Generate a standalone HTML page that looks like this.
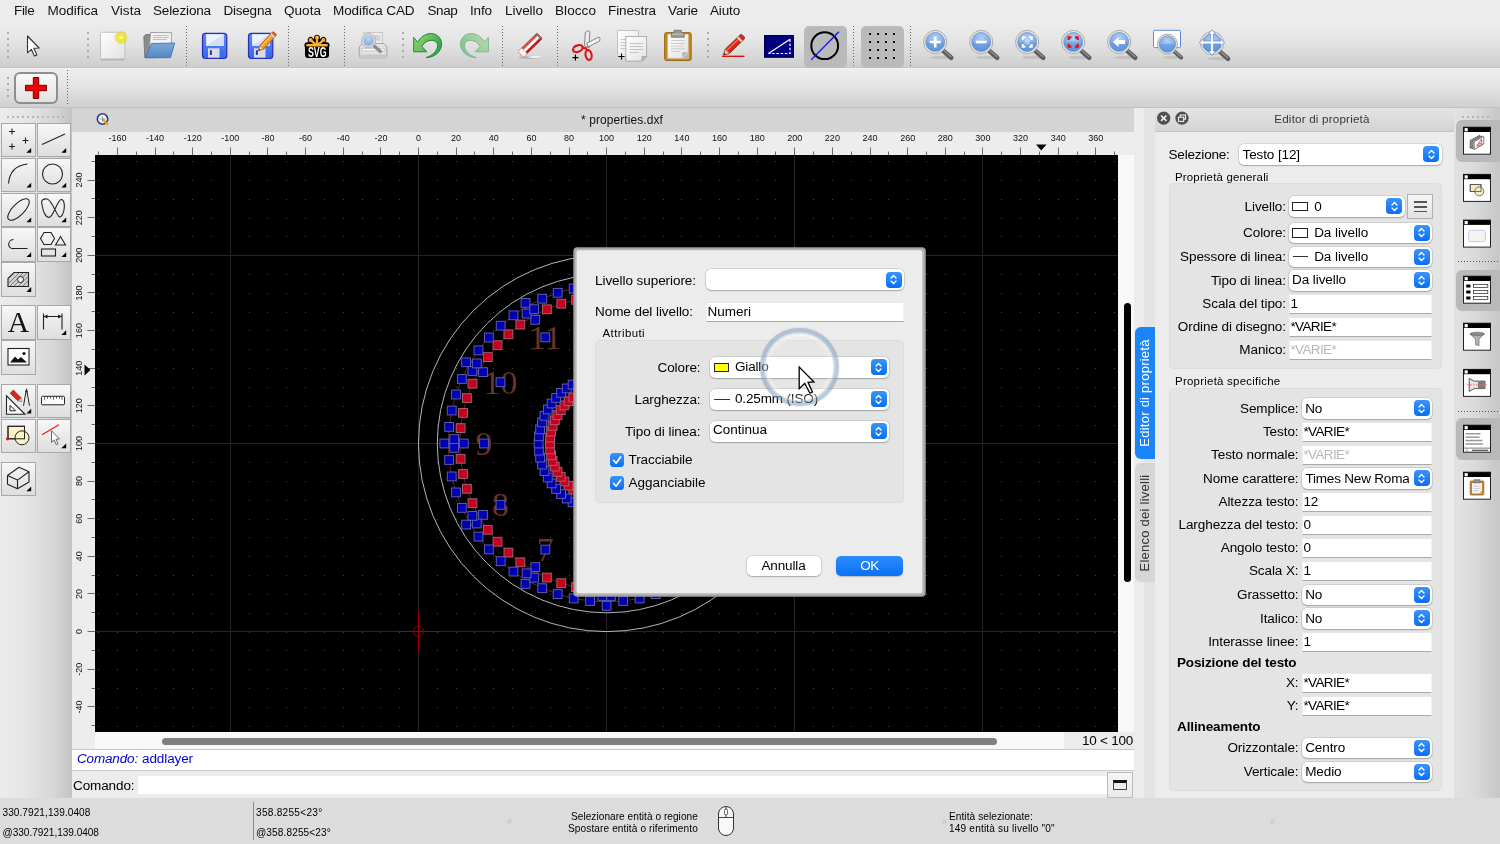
<!DOCTYPE html>
<html lang="it"><head><meta charset="utf-8"><title>properties.dxf</title>
<style>
*{box-sizing:border-box;margin:0;padding:0}
html,body{width:1500px;height:844px;overflow:hidden;background:#ececec;font-family:"Liberation Sans",sans-serif;font-size:13px;color:#000}
#root{position:absolute;left:0;top:0;width:1500px;height:844px;overflow:hidden;will-change:transform;transform:translateZ(0)}
.t{position:absolute;white-space:pre}
.a{position:absolute}
svg{position:absolute;overflow:visible}
.combo{position:absolute;background:#fff;border-radius:5px;box-shadow:0 0 0 .5px rgba(0,0,0,.18),0 1px 1.5px rgba(0,0,0,.22)}
.cb{position:absolute;width:16px;height:16px;border-radius:4px;background:linear-gradient(#3b94fb,#0a6ef5);right:2.3px;top:2.5px}
.field{position:absolute;background:#fff;border:1px solid #f0f0f0;border-top-color:#e6e6e6;border-bottom-color:#a9a9a9}
.grp{position:absolute;background:#e4e4e4;border:1px solid #dcdcdc;border-radius:5px}
.tb{position:absolute;left:0;width:1500px}
.hd{position:absolute;width:2px;background:repeating-linear-gradient(#ababab 0 2px,transparent 2px 6px)}
.sep{position:absolute;width:1px;background:repeating-linear-gradient(#666 0 1px,transparent 1px 3px)}
.tbtn{position:absolute;width:36px;height:36px;background:linear-gradient(#f7f7f7,#dedede);border:1px solid #a8a8a8}
</style></head>
<body>
<div id="root">
<div class="a" style="left:0;top:0;width:1500px;height:23px;background:#ececec"></div><div class="t" style="top:1.42px;font-size:13.52px;line-height:19px;color:#111;letter-spacing:-0.321px;left:14px;">File</div><div class="t" style="top:1.42px;font-size:13.52px;line-height:19px;color:#111;letter-spacing:0.02px;left:47.5px;">Modifica</div><div class="t" style="top:1.42px;font-size:13.52px;line-height:19px;color:#111;letter-spacing:0.038px;left:111px;">Vista</div><div class="t" style="top:1.42px;font-size:13.52px;line-height:19px;color:#111;letter-spacing:-0.153px;left:153px;">Seleziona</div><div class="t" style="top:1.42px;font-size:13.52px;line-height:19px;color:#111;letter-spacing:-0.229px;left:223.5px;">Disegna</div><div class="t" style="top:1.42px;font-size:13.52px;line-height:19px;color:#111;letter-spacing:0.034px;left:284px;">Quota</div><div class="t" style="top:1.42px;font-size:13.52px;line-height:19px;color:#111;letter-spacing:-0.095px;left:333px;">Modifica CAD</div><div class="t" style="top:1.42px;font-size:13.52px;line-height:19px;color:#111;letter-spacing:-0.393px;left:427.5px;">Snap</div><div class="t" style="top:1.42px;font-size:13.52px;line-height:19px;color:#111;letter-spacing:-0.138px;left:470px;">Info</div><div class="t" style="top:1.42px;font-size:13.52px;line-height:19px;color:#111;letter-spacing:-0.046px;left:505px;">Livello</div><div class="t" style="top:1.42px;font-size:13.52px;line-height:19px;color:#111;letter-spacing:0.071px;left:555px;">Blocco</div><div class="t" style="top:1.42px;font-size:13.52px;line-height:19px;color:#111;letter-spacing:-0.104px;left:608px;">Finestra</div><div class="t" style="top:1.42px;font-size:13.52px;line-height:19px;color:#111;letter-spacing:-0.111px;left:668px;">Varie</div><div class="t" style="top:1.42px;font-size:13.52px;line-height:19px;color:#111;letter-spacing:-0.163px;left:710px;">Aiuto</div><div class="tb" style="top:23px;height:44px;background:linear-gradient(#ececec,#e5e5e5 40%,#cecece)"></div><div class="tb" style="top:67px;height:1px;background:#c4c4c4"></div><div class="tb" style="top:68px;height:1px;background:#f2f2f2"></div><div class="tb" style="top:69px;height:38px;background:linear-gradient(#eeeeee,#e5e5e5 40%,#d0d0d0)"></div><div class="tb" style="top:107px;height:1px;background:#c2c2c2"></div><div class="hd" style="left:7px;top:32px;height:26px"></div><div class="hd" style="left:87px;top:32px;height:26px"></div><div class="hd" style="left:402px;top:32px;height:26px"></div><div class="hd" style="left:707px;top:32px;height:26px"></div><div class="hd" style="left:7px;top:77px;height:20px"></div><div class="sep" style="left:186px;top:26px;height:40px"></div><div class="sep" style="left:288px;top:26px;height:40px"></div><div class="sep" style="left:344px;top:26px;height:40px"></div><div class="sep" style="left:502px;top:26px;height:40px"></div><div class="sep" style="left:557px;top:26px;height:40px"></div><div class="sep" style="left:853px;top:26px;height:40px"></div><div class="sep" style="left:910px;top:26px;height:40px"></div><div class="sep" style="left:67px;top:70px;height:36px"></div><div class="a" style="left:804px;top:25.5px;width:43px;height:42.5px;border-radius:5px;background:#bababa"></div><div class="a" style="left:861px;top:25.5px;width:43px;height:42.5px;border-radius:5px;background:#bababa"></div><div class="a" style="left:14px;top:72px;width:44px;height:32px;border-radius:6px;border:2px solid #8e8e8e;background:linear-gradient(#f8f8f8,#e2e2e2)"></div><svg style="left:24px;top:76px" width="24" height="24" viewBox="0 0 24 24"><path d="M9.3 1.5h5.4v7.8h7.8v5.4h-7.8v7.8H9.3v-7.8H1.5V9.3h7.8z" fill="#f00000" stroke="#700" stroke-width="1"/></svg><svg style="left:0;top:0" width="1500" height="110" viewBox="0 0 1500 110"><defs>
<radialGradient id="lens" cx=".5" cy=".3" r=".8"><stop offset="0" stop-color="#b4d0f4"/><stop offset="1" stop-color="#5a8fda"/></radialGradient>
<radialGradient id="glow"><stop offset="0" stop-color="#fffce0"/><stop offset=".35" stop-color="#f4e83a"/><stop offset=".75" stop-color="#e8dc20" stop-opacity=".75"/><stop offset="1" stop-color="#e8dc20" stop-opacity="0"/></radialGradient>
<linearGradient id="paper" x1="0" y1="0" x2="1" y2="1"><stop offset="0" stop-color="#ffffff"/><stop offset="1" stop-color="#e2e2e2"/></linearGradient>
<linearGradient id="flop" x1="0" y1="0" x2="0" y2="1"><stop offset="0" stop-color="#5f8cf6"/><stop offset="1" stop-color="#3668ee"/></linearGradient>
<linearGradient id="fold" x1="0" y1="0" x2="0" y2="1"><stop offset="0" stop-color="#7fa8da"/><stop offset="1" stop-color="#5287c6"/></linearGradient>
<linearGradient id="grn" x1="0" y1="0" x2="1" y2=".6"><stop offset="0" stop-color="#9ad878"/><stop offset="1" stop-color="#35a048"/></linearGradient>
<linearGradient id="grn2" x1="0" y1="0" x2="1" y2=".6"><stop offset="0" stop-color="#bcdcae"/><stop offset="1" stop-color="#84c294"/></linearGradient>
</defs><path d="M27.5 36v16.8l3.9-3.5 3 6.8 2.5-1.1-3-6.7 5.2-.3z" fill="#fff" stroke="#333" stroke-width="1.1" stroke-linejoin="round"/><rect x="100.5" y="33" width="24.5" height="27.5" rx="1.5" fill="#9c9c9c" opacity=".55"/><rect x="100.5" y="32.3" width="24.5" height="26.6" rx="1.5" fill="url(#paper)" stroke="#b9b9b9" stroke-width=".8"/><circle cx="121" cy="37.6" r="7" fill="url(#glow)"/><path d="M143.8 36.5l2-2h6l1.5 2h3v21h-11.5z" fill="#8c8c8c" stroke="#6d6d6d" stroke-width=".8"/><path d="M150.5 32.5l21 .2-.3 20h-22z" fill="#f4f4f4" stroke="#8d8d8d" stroke-width=".8"/><path d="M153 35.5h16M153 37.5h16M153 39.5h14" stroke="#bdbdbd" stroke-width="1"/><path d="M151.5 43.5l23.2-.5-4.2 14.6-25.3.3z" fill="url(#fold)" stroke="#4273ae" stroke-width=".9" stroke-linejoin="round"/><rect x="202.5" y="33.3" width="24.3" height="25.2" rx="3" fill="url(#flop)" stroke="#2a2eb4" stroke-width="1.2"/><rect x="206.1" y="34.2" width="17.6" height="11.6" fill="#eef2fc"/><path d="M206.1 45.8l17.6-11.6v11.6z" fill="#d6def8"/><rect x="208" y="48.3" width="11.5" height="9.3" fill="#dcdce2"/><rect x="209.9" y="50.3" width="2" height="4.6" fill="#1c33c9"/><rect x="248.5" y="33.3" width="24.3" height="25.2" rx="3" fill="url(#flop)" stroke="#2a2eb4" stroke-width="1.2"/><rect x="252.1" y="34.2" width="17.6" height="11.6" fill="#eef2fc"/><path d="M252.1 45.8l17.6-11.6v11.6z" fill="#d6def8"/><rect x="254" y="48.3" width="11.5" height="9.3" fill="#dcdce2"/><rect x="255.9" y="50.3" width="2" height="4.6" fill="#1c33c9"/><g transform="translate(258.6 50.6) rotate(-47) scale(.92 1)"><path d="M0 0l5-2.6h19.5a1.5 1.5 0 0 1 1.5 1.5v2.2a1.5 1.5 0 0 1-1.5 1.5H5z" fill="#f39a1e" stroke="#a8500e" stroke-width=".8"/><path d="M0 0l5-2.6v5.2z" fill="#efd5b0" stroke="#8a5a2a" stroke-width=".5"/><path d="M0 0l1.8-.9v1.8z" fill="#222"/><rect x="21.5" y="-2.6" width="2" height="5.2" fill="#d9d9d9"/><rect x="23.5" y="-2.6" width="2.5" height="5.2" rx="1" fill="#e0584a"/><path d="M5 -.9h16.5" stroke="#fbc46a" stroke-width="1.2"/></g><path d="M317 45V37.6M316.5 45.5L310.6 39.9M317.5 45.5L323.4 39.9M317 45.2H307.3M317 45.2H326.7" stroke="#000" stroke-width="5.8" stroke-linecap="round" fill="none"/><rect x="305" y="43.6" width="24" height="14.3" rx="2.4" fill="#000"/><path d="M317 45V37.6M316.5 45.5L310.6 39.9M317.5 45.5L323.4 39.9M317 45.2H307.3M317 45.2H326.7" stroke="#fbae2c" stroke-width="2.4" stroke-linecap="round" fill="none"/><circle cx="317" cy="37.6" r="2" fill="#fbae2c"/><circle cx="310.6" cy="39.9" r="2" fill="#fbae2c"/><circle cx="323.4" cy="39.9" r="2" fill="#fbae2c"/><text x="317.2" y="56.7" font-family="Liberation Sans,sans-serif" font-weight="700" font-size="14" text-anchor="middle" fill="#fff" textLength="18.6" lengthAdjust="spacingAndGlyphs">SVG</text><rect x="364" y="32.5" width="18.5" height="14" fill="#ececec" stroke="#bdbdbd" stroke-width=".8"/><rect x="374" y="35" width="6.5" height="6" fill="#d4d4d4"/><path d="M359.3 47l3-3.5h21.5l3 3.5v9.3a1.5 1.5 0 0 1-1.5 1.5h-24.5a1.5 1.5 0 0 1-1.5-1.5z" fill="#e2e2e2" stroke="#9e9e9e" stroke-width=".9"/><rect x="361.5" y="48.3" width="23" height="2.6" fill="#fafafa" stroke="#aaa" stroke-width=".5"/><rect x="359.6" y="54.6" width="27" height="3.3" rx="1" fill="#c7c7c7"/><line x1="373" y1="45" x2="380.5" y2="51.5" stroke="#8a8a8a" stroke-width="3.2" stroke-linecap="round"/><circle cx="368.6" cy="40.7" r="6.2" fill="#cfe0f6" stroke="#d8d8d8" stroke-width="2"/><circle cx="368.6" cy="40.7" r="5" fill="url(#lens)" opacity=".75"/><circle cx="368.6" cy="40.7" r="7" fill="none" stroke="#9c9c9c" stroke-width=".6"/><path d="M413.7 37.4L417.6 42.2C421 36 427 33.3 431.5 33.5C438 34 441.8 39 441.6 44.5C441.4 51 435 57.6 426 57.6C432 56 437.6 51 437.6 45.8C437.6 42 434.5 40.2 430.8 40.4C427 40.6 424 43 421.8 46.4L426.9 51.8H413.7Z" fill="url(#grn)" stroke="#1c8a3a" stroke-width="1" stroke-linejoin="round"/><path transform="translate(902.1 0) scale(-1 1)" d="M413.7 37.4L417.6 42.2C421 36 427 33.3 431.5 33.5C438 34 441.8 39 441.6 44.5C441.4 51 435 57.6 426 57.6C432 56 437.6 51 437.6 45.8C437.6 42 434.5 40.2 430.8 40.4C427 40.6 424 43 421.8 46.4L426.9 51.8H413.7Z" fill="url(#grn2)" stroke="#7db98c" stroke-width="1" stroke-linejoin="round"/><ellipse cx="530" cy="57.5" rx="11.5" ry="1.4" fill="#9a9a9a" opacity=".55"/><ellipse cx="535" cy="57" rx="7" ry=".9" fill="#fff" opacity=".8"/><g transform="translate(520.8 54.3) rotate(-44.4)"><rect x="0" y="-3.9" width="26.4" height="7.8" rx="1.2" fill="#cf1414" stroke="#961010" stroke-width=".5"/><rect x="0" y="-3.9" width="26.4" height="2.6" rx="1" fill="#de4a4a"/><rect x="5" y="-1.4" width="20" height="2.9" fill="#fff"/><rect x="0" y="-3.9" width="5" height="7.8" rx="1" fill="#fafafa" stroke="#bbb" stroke-width=".5"/><rect x="24.8" y="-3.9" width="1.6" height="7.8" rx=".8" fill="#777"/></g><path d="M585.3 32.5l3.2-1.8 1.3.8-.9 16.5-4.4-2.5z" fill="#ececec" stroke="#6a6a6a" stroke-width=".8" stroke-linejoin="round"/><path d="M599 37l1 1.2-.3 2.8-11.7 6-1.2-3.8z" fill="#f4f4f4" stroke="#6a6a6a" stroke-width=".8" stroke-linejoin="round"/><ellipse cx="577.8" cy="48.6" rx="5" ry="3.2" transform="rotate(-22 577.8 48.6)" fill="none" stroke="#d8181e" stroke-width="2.2"/><ellipse cx="588.6" cy="55" rx="3" ry="5" transform="rotate(-12 588.6 55)" fill="none" stroke="#d8181e" stroke-width="2.2"/><path d="M582.5 47.5l4.5 1.3M587.2 49.5l.4 1.3" stroke="#d8181e" stroke-width="2.4"/><path d="M572.4 57.6h6M575.4 54.6v6" stroke="#000" stroke-width="1.2"/><path d="M617.5 30.5h21v26h-21z" fill="url(#paper)" stroke="#b5b5b5" stroke-width=".8"/><path d="M620.5 39.5h9M620.5 42.5h9M620.5 45.5h9M620.5 48.5h6" stroke="#c9c9c9" stroke-width="1"/><path d="M625.8 36.5h20.8v20l-4.6 4.6h-16.2z" fill="url(#paper)" stroke="#9f9f9f" stroke-width=".8"/><path d="M646.6 56.5l-4.6 4.6v-4.6z" fill="#bdbdbd" stroke="#8e8e8e" stroke-width=".6"/><path d="M629.5 43.5h13.5M629.5 46.5h13.5M629.5 49.5h13.5M629.5 52.5h9" stroke="#c4c4c4" stroke-width="1"/><path d="M618.5 56.5h6M621.5 53.5v6" stroke="#000" stroke-width="1.2"/><rect x="664.6" y="32.6" width="26.6" height="28" rx="1.8" fill="#c9861f" stroke="#96600f" stroke-width=".9"/><path d="M667.7 34.3h20.6v24h-20.6z" fill="url(#paper)" stroke="#c9c9c9" stroke-width=".5"/><path d="M688.3 58.3h-6v-6h6z" fill="#b4b4b4"/><path d="M682.3 58.3l6-6" stroke="#eee" stroke-width=".8"/><path d="M671 40.5h14M671 43.5h14M671 46.2h12M671 48.8h14M671 51.5h9" stroke="#cdcdcd" stroke-width="1"/><path d="M671.3 37.3v-3.3a1.5 1.5 0 0 1 1.5-1.5h1.2v-2.2h7.5v2.2h1.3a1.5 1.5 0 0 1 1.5 1.5v3.3z" fill="#9a9b90" stroke="#6a6a62" stroke-width=".7" stroke-linejoin="round"/><path d="M672.3 34.2h11" stroke="#c4c5bb" stroke-width="1"/><g transform="translate(723.5 55) rotate(-44)"><path d="M0 0l5.5-3h20a2 2 0 0 1 2 2v2a2 2 0 0 1-2 2h-20z" fill="#e0241c" stroke="#7a3a10" stroke-width=".8"/><path d="M0 0l5.5-3v6z" fill="#e9c79a" stroke="#7a4a1a" stroke-width=".5"/><path d="M0 0l2-1.1v2.2z" fill="#222"/><rect x="21.5" y="-3" width="2.2" height="6" fill="#d9d9d9"/><path d="M6 -1h15" stroke="#f4786c" stroke-width="1.2"/></g><path d="M722 56.3h22.5" stroke="#ee0000" stroke-width="1.3"/><rect x="764.5" y="35.5" width="29" height="21.8" fill="#000080" stroke="#00004a" stroke-width="1"/><path d="M768.5 53.5L790 39.3" stroke="#fff" stroke-width="1.2"/><path d="M790 39.3V53.5H768.5" stroke="#fff" stroke-width="1.2" stroke-dasharray="2.6 1.6" fill="none"/><circle cx="824.7" cy="45.7" r="13.4" fill="none" stroke="#000" stroke-width="2"/><path d="M811.2 59.9L838.9 31.8" stroke="#1010ee" stroke-width="1.3"/><rect x="869.1" y="33" width="2" height="2" fill="#000"/><rect x="869.1" y="41" width="2" height="2" fill="#000"/><rect x="869.1" y="49" width="2" height="2" fill="#000"/><rect x="869.1" y="57" width="2" height="2" fill="#000"/><rect x="877.1" y="33" width="2" height="2" fill="#000"/><rect x="877.1" y="41" width="2" height="2" fill="#000"/><rect x="877.1" y="49" width="2" height="2" fill="#000"/><rect x="877.1" y="57" width="2" height="2" fill="#000"/><rect x="885" y="33" width="2" height="2" fill="#000"/><rect x="885" y="41" width="2" height="2" fill="#000"/><rect x="885" y="49" width="2" height="2" fill="#000"/><rect x="885" y="57" width="2" height="2" fill="#000"/><rect x="893" y="33" width="2" height="2" fill="#000"/><rect x="893" y="41" width="2" height="2" fill="#000"/><rect x="893" y="49" width="2" height="2" fill="#000"/><rect x="893" y="57" width="2" height="2" fill="#000"/><g>
<ellipse cx="941.2" cy="57.5" rx="11" ry="1.6" fill="#9a9a9a" opacity=".35"/>
<line x1="942.9" y1="50.4" x2="951.2" y2="57.7" stroke="#5c5c5c" stroke-width="4.6" stroke-linecap="round"/>
<line x1="944.4" y1="50.9" x2="950.9" y2="56.6" stroke="#9a9a9a" stroke-width="1.2" stroke-linecap="round"/>
<circle cx="935.2" cy="42" r="11.6" fill="#e9e9e4" stroke="#a4a4a0" stroke-width=".9"/>
<circle cx="935.2" cy="42" r="9.5" fill="url(#lens)" stroke="#6f93c8" stroke-width=".8"/>
<path d="M926 43.1a9.3 9.3 0 0 0 18.4 0 q-9.2 -2.9 -18.4 0z" fill="#4a86d8" opacity=".4"/>
<path d="M929.7 42h11M935.2 36.5v11" stroke="#fff" stroke-width="2.6" fill="none"/></g><g>
<ellipse cx="987.2" cy="57.5" rx="11" ry="1.6" fill="#9a9a9a" opacity=".35"/>
<line x1="988.9" y1="50.4" x2="997.2" y2="57.7" stroke="#5c5c5c" stroke-width="4.6" stroke-linecap="round"/>
<line x1="990.4" y1="50.9" x2="996.9" y2="56.6" stroke="#9a9a9a" stroke-width="1.2" stroke-linecap="round"/>
<circle cx="981.2" cy="42" r="11.6" fill="#e9e9e4" stroke="#a4a4a0" stroke-width=".9"/>
<circle cx="981.2" cy="42" r="9.5" fill="url(#lens)" stroke="#6f93c8" stroke-width=".8"/>
<path d="M972 43.1a9.3 9.3 0 0 0 18.4 0 q-9.2 -2.9 -18.4 0z" fill="#4a86d8" opacity=".4"/>
<path d="M975.7 42h11" stroke="#fff" stroke-width="2.6" fill="none"/></g><g>
<ellipse cx="1033.2" cy="57.5" rx="11" ry="1.6" fill="#9a9a9a" opacity=".35"/>
<line x1="1034.9" y1="50.4" x2="1043.2" y2="57.7" stroke="#5c5c5c" stroke-width="4.6" stroke-linecap="round"/>
<line x1="1036.4" y1="50.9" x2="1042.9" y2="56.6" stroke="#9a9a9a" stroke-width="1.2" stroke-linecap="round"/>
<circle cx="1027.2" cy="42" r="11.6" fill="#e9e9e4" stroke="#a4a4a0" stroke-width=".9"/>
<circle cx="1027.2" cy="42" r="9.5" fill="url(#lens)" stroke="#6f93c8" stroke-width=".8"/>
<path d="M1018 43.1a9.3 9.3 0 0 0 18.4 0 q-9.2 -2.9 -18.4 0z" fill="#4a86d8" opacity=".4"/>
<path d="M1022.7 40v-2.7h2.7M1029 37.3h2.7v2.7M1031.7 44v2.7h-2.7M1025.4 46.7h-2.7v-2.7" stroke="#fff" stroke-width="2" fill="none"/><rect x="1024.7" y="39.5" width="5" height="5" fill="#fff" opacity=".35"/></g><g>
<ellipse cx="1079.2" cy="57.5" rx="11" ry="1.6" fill="#9a9a9a" opacity=".35"/>
<line x1="1080.9" y1="50.4" x2="1089.2" y2="57.7" stroke="#5c5c5c" stroke-width="4.6" stroke-linecap="round"/>
<line x1="1082.4" y1="50.9" x2="1088.9" y2="56.6" stroke="#9a9a9a" stroke-width="1.2" stroke-linecap="round"/>
<circle cx="1073.2" cy="42" r="11.6" fill="#e9e9e4" stroke="#a4a4a0" stroke-width=".9"/>
<circle cx="1073.2" cy="42" r="9.5" fill="url(#lens)" stroke="#6f93c8" stroke-width=".8"/>
<path d="M1064 43.1a9.3 9.3 0 0 0 18.4 0 q-9.2 -2.9 -18.4 0z" fill="#4a86d8" opacity=".4"/>
<path d="M1068.7 40v-2.7h2.7M1075 37.3h2.7v2.7M1077.7 44v2.7h-2.7M1071.4 46.7h-2.7v-2.7" stroke="#e81010" stroke-width="2.2" fill="none"/></g><g>
<ellipse cx="1125.2" cy="57.5" rx="11" ry="1.6" fill="#9a9a9a" opacity=".35"/>
<line x1="1126.9" y1="50.4" x2="1135.2" y2="57.7" stroke="#5c5c5c" stroke-width="4.6" stroke-linecap="round"/>
<line x1="1128.4" y1="50.9" x2="1134.9" y2="56.6" stroke="#9a9a9a" stroke-width="1.2" stroke-linecap="round"/>
<circle cx="1119.2" cy="42" r="11.6" fill="#e9e9e4" stroke="#a4a4a0" stroke-width=".9"/>
<circle cx="1119.2" cy="42" r="9.5" fill="url(#lens)" stroke="#6f93c8" stroke-width=".8"/>
<path d="M1110 43.1a9.3 9.3 0 0 0 18.4 0 q-9.2 -2.9 -18.4 0z" fill="#4a86d8" opacity=".4"/>
<path d="M1113 42l5.5-5v3h6.5v4h-6.5v3z" fill="#fff"/></g><rect x="1153.5" y="30.3" width="27" height="17.3" rx="1" fill="#fff" stroke="#5f8cd0" stroke-width="1"/><g>
<ellipse cx="1172.6" cy="57.4" rx="9.5" ry="1.6" fill="#9a9a9a" opacity=".35"/>
<line x1="1174" y1="51.3" x2="1181.1" y2="57.6" stroke="#5c5c5c" stroke-width="4" stroke-linecap="round"/>
<line x1="1175.3" y1="51.7" x2="1180.9" y2="56.6" stroke="#9a9a9a" stroke-width="1.2" stroke-linecap="round"/>
<circle cx="1167.4" cy="44.1" r="10" fill="#e9e9e4" stroke="#a4a4a0" stroke-width=".9"/>
<circle cx="1167.4" cy="44.1" r="8.2" fill="url(#lens)" stroke="#6f93c8" stroke-width=".8"/>
<path d="M1159.5 45.1a8 8 0 0 0 15.8 0 q-7.9 -2.5 -15.8 0z" fill="#4a86d8" opacity=".4"/>
</g><g>
<ellipse cx="1218" cy="58.6" rx="11" ry="1.6" fill="#9a9a9a" opacity=".35"/>
<line x1="1219.7" y1="51.5" x2="1228" y2="58.8" stroke="#5c5c5c" stroke-width="4.6" stroke-linecap="round"/>
<line x1="1221.2" y1="52" x2="1227.7" y2="57.7" stroke="#9a9a9a" stroke-width="1.2" stroke-linecap="round"/>
<circle cx="1212" cy="43.1" r="11.6" fill="#e9e9e4" stroke="#a4a4a0" stroke-width=".9"/>
<circle cx="1212" cy="43.1" r="9.5" fill="url(#lens)" stroke="#6f93c8" stroke-width=".8"/>
<path d="M1202.8 44.2a9.3 9.3 0 0 0 18.4 0 q-9.2 -2.9 -18.4 0z" fill="#4a86d8" opacity=".4"/>
</g><path transform="translate(0 -.3)" d="M1212 30l3.4 4.4h-2v7h7v-2l4.4 3.4-4.4 3.4v-2h-7v7h2l-3.4 4.4-3.4-4.4h2v-7h-7v2l-4.4-3.4 4.4-3.4v2h7v-7h-2z" fill="#fff" stroke="#5a8ad8" stroke-width=".7"/></svg><div class="a" style="left:0;top:108px;width:72px;height:690px;background:linear-gradient(90deg,#ececec,#e6e6e6 35%,#d6d6d6 75%,#c3c3c3)"></div><div class="a" style="left:7px;top:116px;width:57px;height:2px;background:repeating-linear-gradient(90deg,#b4b4b4 0 2px,transparent 2px 5px)"></div><div class="tbtn" style="left:1.4px;top:123px;width:34.6px;height:34.4px"></div><div class="tbtn" style="left:36.6px;top:123px;width:34px;height:34.4px"></div><div class="tbtn" style="left:1.4px;top:157.8px;width:34.6px;height:34.4px"></div><div class="tbtn" style="left:36.6px;top:157.8px;width:34px;height:34.4px"></div><div class="tbtn" style="left:1.4px;top:192.6px;width:34.6px;height:34.4px"></div><div class="tbtn" style="left:36.6px;top:192.6px;width:34px;height:34.4px"></div><div class="tbtn" style="left:1.4px;top:227.4px;width:34.6px;height:34.4px"></div><div class="tbtn" style="left:36.6px;top:227.4px;width:34px;height:34.4px"></div><div class="tbtn" style="left:1.4px;top:262.2px;width:34.6px;height:34.4px"></div><div class="tbtn" style="left:1.4px;top:305.4px;width:34.6px;height:34.4px"></div><div class="tbtn" style="left:36.6px;top:305.4px;width:34px;height:34.4px"></div><div class="tbtn" style="left:1.4px;top:340.2px;width:34.6px;height:34.4px"></div><div class="tbtn" style="left:1.4px;top:383.8px;width:34.6px;height:34.4px"></div><div class="tbtn" style="left:36.6px;top:383.8px;width:34px;height:34.4px"></div><div class="tbtn" style="left:1.4px;top:418.6px;width:34.6px;height:34.4px"></div><div class="tbtn" style="left:36.6px;top:418.6px;width:34px;height:34.4px"></div><div class="tbtn" style="left:1.4px;top:461.6px;width:34.6px;height:34.4px"></div><svg style="left:0;top:0" width="72" height="500" viewBox="0 0 72 500"><path d="M31.2 152.7h-4.8l4.8-4.8z" fill="#000"/><path d="M66.2 152.7h-4.8l4.8-4.8z" fill="#000"/><path d="M31.2 187.5h-4.8l4.8-4.8z" fill="#000"/><path d="M66.2 187.5h-4.8l4.8-4.8z" fill="#000"/><path d="M31.2 222.29999999999998h-4.8l4.8-4.8z" fill="#000"/><path d="M66.2 222.29999999999998h-4.8l4.8-4.8z" fill="#000"/><path d="M31.2 257.1h-4.8l4.8-4.8z" fill="#000"/><path d="M66.2 257.1h-4.8l4.8-4.8z" fill="#000"/><path d="M31.2 291.9h-4.8l4.8-4.8z" fill="#000"/><path d="M66.2 335.09999999999997h-4.8l4.8-4.8z" fill="#000"/><path d="M31.2 413.5h-4.8l4.8-4.8z" fill="#000"/><path d="M66.2 448.3h-4.8l4.8-4.8z" fill="#000"/><path d="M31.2 491.3h-4.8l4.8-4.8z" fill="#000"/><path d="M9 131.5h6M12 128.5v6" stroke="#222" stroke-width="1.1" fill="none"/><path d="M22.5 140.5h6M25.5 137.5v6" stroke="#222" stroke-width="1.1" fill="none"/><path d="M9 146.5h6M12 143.5v6" stroke="#222" stroke-width="1.1" fill="none"/><path d="M42 144.5L65 134" stroke="#222" stroke-width="1.1" fill="none"/><path d="M8.5 183.5Q10 166 27.5 164" stroke="#222" stroke-width="1.1" fill="none"/><circle cx="52.5" cy="174" r="10" stroke="#222" stroke-width="1.1" fill="none"/><ellipse cx="18.5" cy="209.5" rx="14" ry="5.8" transform="rotate(-45 18.5 209.5)" stroke="#222" stroke-width="1.1" fill="none"/><path d="M41.7 203C43 212 46 219 50 217C54 215 57 201 61 199.5C64 199 65 205 64 210C63 215 61 218 59 216.5C56 214 52 200 47 199C43.5 198.5 41 200 41.7 203z" stroke="#222" stroke-width="1.1" fill="none"/><path d="M13.5 239.5C7 240 7 249.5 14 248.5H27.5" stroke="#222" stroke-width="1.1" fill="none"/><path d="M40.5 238.5l3.5-6h7l3.5 6-3.5 6h-7z" stroke="#222" stroke-width="1.1" fill="none"/><path d="M55.5 245l5-8.5 5 8.5z" stroke="#222" stroke-width="1.1" fill="none"/><rect x="41.5" y="249" width="14" height="7" stroke="#222" stroke-width="1.1" fill="none"/><path d="M8 286.5v-8l6-6h14.5v14z" fill="#d0d0d0" stroke="#222" stroke-width="1.1"/><path d="M9 283l10-10M10 286l13-13M14 286l13-13M18.5 286l9.5-9.5M23 286l5-5" stroke="#555" stroke-width=".7"/><circle cx="20.5" cy="279.5" r="3" fill="#f4f4f4" stroke="#222" stroke-width="1"/><text x="18.5" y="331.5" font-family="Liberation Serif,serif" font-size="29.5" text-anchor="middle" fill="#111">A</text><path d="M43.5 313.5v16M62 313.5v16M43.5 316.5h18.5" stroke="#222" stroke-width="1.1" fill="none"/><path d="M43.5 316.5l4-2v4zM62 316.5l-4-2v4z" fill="#222"/><rect x="8" y="348.5" width="21" height="16.5" fill="#fff" stroke="#222" stroke-width="1.1"/><path d="M10 362.5l5-6 3 3 3-2.5 6 5.5z" fill="#111"/><circle cx="24" cy="353.5" r="1.6" fill="#111"/><g transform="translate(0 .8)"><path d="M6.5 395v18.5h18.5z" fill="#fafafa" stroke="#222" stroke-width="1.1"/><path d="M10 404.5v5.5h5.5z" fill="none" stroke="#222" stroke-width="1"/><g transform="translate(19.5 398.5) rotate(-135)"><rect x="0" y="-2.3" width="11" height="4.6" fill="#d8261c" stroke="#7a2a10" stroke-width=".5"/><path d="M-3.5 0l3.5-2.3v4.6z" fill="#e9c79a" stroke="#444" stroke-width=".4"/></g><path d="M26.5 388l-3 17M26.5 388l3 17M25 391h3" stroke="#222" stroke-width="1" fill="none"/><rect x="41.5" y="395.5" width="23" height="8.5" rx="1" fill="#fafafa" stroke="#222" stroke-width="1"/><path d="M44.5 396v3M47.5 396v2M50.5 396v2M53.5 396v3M56.5 396v2M59.5 396v2M62 396v3" stroke="#222" stroke-width=".7"/><rect x="8" y="425.5" width="16.5" height="12.5" fill="#fdf3c4" stroke="#222" stroke-width="1"/><circle cx="22" cy="437" r="7" fill="#fdf3c4" stroke="#222" stroke-width="1"/><rect x="8" y="425.5" width="16.5" height="12.5" fill="none" stroke="#222" stroke-width="1"/><circle cx="7.5" cy="438" r="1.6" fill="#e81010"/><path d="M42 434L59 424" stroke="#e82020" stroke-width="1.3"/><path d="M51.5 430v11.5l2.7-2.3 2 4.6 1.8-.8-2-4.6 3.5-.2z" fill="#fff" stroke="#444" stroke-width=".8"/></g><path d="M7.5 475.5l11.5-8.3 10 4.6v10.2l-11.5 6.8-10-4.6zM7.5 475.5l10 4.6 11.5-8.3M17.5 480.1v8.7" stroke="#222" stroke-width="1.1" fill="none" stroke-linejoin="round"/></svg><div class="a" style="left:72px;top:108px;width:1062px;height:23.5px;background:#d4d4d4"></div><div class="t" style="top:111.66px;font-size:11.96px;line-height:17px;color:#111;letter-spacing:0.098px;left:581px;">* properties.dxf</div><svg style="left:95.6px;top:111.9px" width="15" height="15" viewBox="0 0 15 15"><circle cx="6.5" cy="7" r="5.2" fill="#f4f4f4" stroke="#2a3a8a" stroke-width="1.6"/><path d="M6.5 7l5.5 6" stroke="#e8a020" stroke-width="2"/><path d="M3.5 7h6M6.5 4v6" stroke="#888" stroke-width=".7"/></svg><div class="a" style="left:72px;top:131.5px;width:1062px;height:23.5px;background:#ededed"></div><div class="a" style="left:72px;top:131.5px;width:23px;height:616.5px;background:#ededed"></div><div class="a" style="left:1118px;top:155px;width:15.5px;height:593px;background:#f8f8f8"></div><div class="a" style="left:95px;top:731.5px;width:1038.5px;height:17px;background:#f8f8f8"></div><div class="a" style="left:1124px;top:303px;width:7px;height:279px;border-radius:3.5px;background:#000"></div><div class="a" style="left:162px;top:737.5px;width:835px;height:7px;border-radius:3.5px;background:#808080"></div><div class="a" style="left:1064px;top:731.5px;width:70px;height:17px;background:#ececec"></div><div class="t" style="top:730.82px;font-size:13.52px;line-height:19px;color:#000;letter-spacing:-0.25px;left:1082px;">10 &lt; 100</div><svg style="left:0;top:0" width="1140" height="750" viewBox="0 0 1140 750"><path d="M98.5 151.5V155M117.5 147.5V155M136.5 151.5V155M155.5 147.5V155M173.5 151.5V155M192.5 147.5V155M211.5 151.5V155M230.5 147.5V155M249.5 151.5V155M267.5 147.5V155M286.5 151.5V155M305.5 147.5V155M324.5 151.5V155M343.5 147.5V155M362.5 151.5V155M380.5 147.5V155M399.5 151.5V155M418.5 147.5V155M437.5 151.5V155M456.5 147.5V155M474.5 151.5V155M493.5 147.5V155M512.5 151.5V155M531.5 147.5V155M550.5 151.5V155M569.5 147.5V155M587.5 151.5V155M606.5 147.5V155M625.5 151.5V155M644.5 147.5V155M663.5 151.5V155M681.5 147.5V155M700.5 151.5V155M719.5 147.5V155M738.5 151.5V155M757.5 147.5V155M775.5 151.5V155M794.5 147.5V155M813.5 151.5V155M832.5 147.5V155M851.5 151.5V155M870.5 147.5V155M888.5 151.5V155M907.5 147.5V155M926.5 151.5V155M945.5 147.5V155M964.5 151.5V155M982.5 147.5V155M1001.5 151.5V155M1020.5 147.5V155M1039.5 151.5V155M1058.5 147.5V155M1077.5 151.5V155M1095.5 147.5V155M1114.5 151.5V155M91.5 725.5H95M87.5 706.5H95M91.5 688.5H95M87.5 669.5H95M91.5 650.5H95M87.5 631.5H95M91.5 612.5H95M87.5 593.5H95M91.5 575.5H95M87.5 556.5H95M91.5 537.5H95M87.5 518.5H95M91.5 499.5H95M87.5 481.5H95M91.5 462.5H95M87.5 443.5H95M91.5 424.5H95M87.5 405.5H95M91.5 387.5H95M87.5 368.5H95M91.5 349.5H95M87.5 330.5H95M91.5 311.5H95M87.5 292.5H95M91.5 274.5H95M87.5 255.5H95M91.5 236.5H95M87.5 217.5H95M91.5 198.5H95M87.5 180.5H95M91.5 161.5H95" stroke="#6a6a6a" stroke-width="1" fill="none"/><text x="117.5" y="140.8" font-size="9.6" text-anchor="middle" fill="#111" font-family="Liberation Sans,sans-serif" textLength="18.1" lengthAdjust="spacingAndGlyphs">-160</text><text x="155.1" y="140.8" font-size="9.6" text-anchor="middle" fill="#111" font-family="Liberation Sans,sans-serif" textLength="18.1" lengthAdjust="spacingAndGlyphs">-140</text><text x="192.7" y="140.8" font-size="9.6" text-anchor="middle" fill="#111" font-family="Liberation Sans,sans-serif" textLength="18.1" lengthAdjust="spacingAndGlyphs">-120</text><text x="230.3" y="140.8" font-size="9.6" text-anchor="middle" fill="#111" font-family="Liberation Sans,sans-serif" textLength="18.1" lengthAdjust="spacingAndGlyphs">-100</text><text x="268" y="140.8" font-size="9.6" text-anchor="middle" fill="#111" font-family="Liberation Sans,sans-serif" textLength="13" lengthAdjust="spacingAndGlyphs">-80</text><text x="305.6" y="140.8" font-size="9.6" text-anchor="middle" fill="#111" font-family="Liberation Sans,sans-serif" textLength="13" lengthAdjust="spacingAndGlyphs">-60</text><text x="343.2" y="140.8" font-size="9.6" text-anchor="middle" fill="#111" font-family="Liberation Sans,sans-serif" textLength="13" lengthAdjust="spacingAndGlyphs">-40</text><text x="380.9" y="140.8" font-size="9.6" text-anchor="middle" fill="#111" font-family="Liberation Sans,sans-serif" textLength="13" lengthAdjust="spacingAndGlyphs">-20</text><text x="418.5" y="140.8" font-size="9.6" text-anchor="middle" fill="#111" font-family="Liberation Sans,sans-serif" textLength="5" lengthAdjust="spacingAndGlyphs">0</text><text x="456.1" y="140.8" font-size="9.6" text-anchor="middle" fill="#111" font-family="Liberation Sans,sans-serif" textLength="10" lengthAdjust="spacingAndGlyphs">20</text><text x="493.8" y="140.8" font-size="9.6" text-anchor="middle" fill="#111" font-family="Liberation Sans,sans-serif" textLength="10" lengthAdjust="spacingAndGlyphs">40</text><text x="531.4" y="140.8" font-size="9.6" text-anchor="middle" fill="#111" font-family="Liberation Sans,sans-serif" textLength="10" lengthAdjust="spacingAndGlyphs">60</text><text x="569" y="140.8" font-size="9.6" text-anchor="middle" fill="#111" font-family="Liberation Sans,sans-serif" textLength="10" lengthAdjust="spacingAndGlyphs">80</text><text x="606.6" y="140.8" font-size="9.6" text-anchor="middle" fill="#111" font-family="Liberation Sans,sans-serif" textLength="15.1" lengthAdjust="spacingAndGlyphs">100</text><text x="644.3" y="140.8" font-size="9.6" text-anchor="middle" fill="#111" font-family="Liberation Sans,sans-serif" textLength="15.1" lengthAdjust="spacingAndGlyphs">120</text><text x="681.9" y="140.8" font-size="9.6" text-anchor="middle" fill="#111" font-family="Liberation Sans,sans-serif" textLength="15.1" lengthAdjust="spacingAndGlyphs">140</text><text x="719.5" y="140.8" font-size="9.6" text-anchor="middle" fill="#111" font-family="Liberation Sans,sans-serif" textLength="15.1" lengthAdjust="spacingAndGlyphs">160</text><text x="757.2" y="140.8" font-size="9.6" text-anchor="middle" fill="#111" font-family="Liberation Sans,sans-serif" textLength="15.1" lengthAdjust="spacingAndGlyphs">180</text><text x="794.8" y="140.8" font-size="9.6" text-anchor="middle" fill="#111" font-family="Liberation Sans,sans-serif" textLength="15.1" lengthAdjust="spacingAndGlyphs">200</text><text x="832.4" y="140.8" font-size="9.6" text-anchor="middle" fill="#111" font-family="Liberation Sans,sans-serif" textLength="15.1" lengthAdjust="spacingAndGlyphs">220</text><text x="870.1" y="140.8" font-size="9.6" text-anchor="middle" fill="#111" font-family="Liberation Sans,sans-serif" textLength="15.1" lengthAdjust="spacingAndGlyphs">240</text><text x="907.7" y="140.8" font-size="9.6" text-anchor="middle" fill="#111" font-family="Liberation Sans,sans-serif" textLength="15.1" lengthAdjust="spacingAndGlyphs">260</text><text x="945.3" y="140.8" font-size="9.6" text-anchor="middle" fill="#111" font-family="Liberation Sans,sans-serif" textLength="15.1" lengthAdjust="spacingAndGlyphs">280</text><text x="982.9" y="140.8" font-size="9.6" text-anchor="middle" fill="#111" font-family="Liberation Sans,sans-serif" textLength="15.1" lengthAdjust="spacingAndGlyphs">300</text><text x="1020.6" y="140.8" font-size="9.6" text-anchor="middle" fill="#111" font-family="Liberation Sans,sans-serif" textLength="15.1" lengthAdjust="spacingAndGlyphs">320</text><text x="1058.2" y="140.8" font-size="9.6" text-anchor="middle" fill="#111" font-family="Liberation Sans,sans-serif" textLength="15.1" lengthAdjust="spacingAndGlyphs">340</text><text x="1095.8" y="140.8" font-size="9.6" text-anchor="middle" fill="#111" font-family="Liberation Sans,sans-serif" textLength="15.1" lengthAdjust="spacingAndGlyphs">360</text><text transform="translate(81.5 706.9) rotate(-90)" font-size="9.6" text-anchor="middle" fill="#111" font-family="Liberation Sans,sans-serif" textLength="13" lengthAdjust="spacingAndGlyphs">-40</text><text transform="translate(81.5 669.2) rotate(-90)" font-size="9.6" text-anchor="middle" fill="#111" font-family="Liberation Sans,sans-serif" textLength="13" lengthAdjust="spacingAndGlyphs">-20</text><text transform="translate(81.5 631.6) rotate(-90)" font-size="9.6" text-anchor="middle" fill="#111" font-family="Liberation Sans,sans-serif" textLength="5" lengthAdjust="spacingAndGlyphs">0</text><text transform="translate(81.5 594) rotate(-90)" font-size="9.6" text-anchor="middle" fill="#111" font-family="Liberation Sans,sans-serif" textLength="10" lengthAdjust="spacingAndGlyphs">20</text><text transform="translate(81.5 556.3) rotate(-90)" font-size="9.6" text-anchor="middle" fill="#111" font-family="Liberation Sans,sans-serif" textLength="10" lengthAdjust="spacingAndGlyphs">40</text><text transform="translate(81.5 518.7) rotate(-90)" font-size="9.6" text-anchor="middle" fill="#111" font-family="Liberation Sans,sans-serif" textLength="10" lengthAdjust="spacingAndGlyphs">60</text><text transform="translate(81.5 481.1) rotate(-90)" font-size="9.6" text-anchor="middle" fill="#111" font-family="Liberation Sans,sans-serif" textLength="10" lengthAdjust="spacingAndGlyphs">80</text><text transform="translate(81.5 443.5) rotate(-90)" font-size="9.6" text-anchor="middle" fill="#111" font-family="Liberation Sans,sans-serif" textLength="15.1" lengthAdjust="spacingAndGlyphs">100</text><text transform="translate(81.5 405.8) rotate(-90)" font-size="9.6" text-anchor="middle" fill="#111" font-family="Liberation Sans,sans-serif" textLength="15.1" lengthAdjust="spacingAndGlyphs">120</text><text transform="translate(81.5 368.2) rotate(-90)" font-size="9.6" text-anchor="middle" fill="#111" font-family="Liberation Sans,sans-serif" textLength="15.1" lengthAdjust="spacingAndGlyphs">140</text><text transform="translate(81.5 330.6) rotate(-90)" font-size="9.6" text-anchor="middle" fill="#111" font-family="Liberation Sans,sans-serif" textLength="15.1" lengthAdjust="spacingAndGlyphs">160</text><text transform="translate(81.5 292.9) rotate(-90)" font-size="9.6" text-anchor="middle" fill="#111" font-family="Liberation Sans,sans-serif" textLength="15.1" lengthAdjust="spacingAndGlyphs">180</text><text transform="translate(81.5 255.3) rotate(-90)" font-size="9.6" text-anchor="middle" fill="#111" font-family="Liberation Sans,sans-serif" textLength="15.1" lengthAdjust="spacingAndGlyphs">200</text><text transform="translate(81.5 217.7) rotate(-90)" font-size="9.6" text-anchor="middle" fill="#111" font-family="Liberation Sans,sans-serif" textLength="15.1" lengthAdjust="spacingAndGlyphs">220</text><text transform="translate(81.5 180) rotate(-90)" font-size="9.6" text-anchor="middle" fill="#111" font-family="Liberation Sans,sans-serif" textLength="15.1" lengthAdjust="spacingAndGlyphs">240</text><path d="M1036 144.5h10.5l-5.25 6z" fill="#000"/><path d="M84.5 364.5v11l6-5.5z" fill="#000"/></svg><svg style="left:95px;top:155px;overflow:hidden;background:#000" width="1023" height="576.5" viewBox="95 155 1023 576.5"><path d="M98 726.5h1M98 707.5h1M98 688.5h1M98 669.5h1M98 650.5h1M98 632.5h1M98 613.5h1M98 594.5h1M98 575.5h1M98 556.5h1M98 537.5h1M98 519.5h1M98 500.5h1M98 481.5h1M98 462.5h1M98 443.5h1M98 425.5h1M98 406.5h1M98 387.5h1M98 368.5h1M98 349.5h1M98 330.5h1M98 312.5h1M98 293.5h1M98 274.5h1M98 255.5h1M98 236.5h1M98 218.5h1M98 199.5h1M98 180.5h1M98 161.5h1M117 726.5h1M117 707.5h1M117 688.5h1M117 669.5h1M117 650.5h1M117 632.5h1M117 613.5h1M117 594.5h1M117 575.5h1M117 556.5h1M117 537.5h1M117 519.5h1M117 500.5h1M117 481.5h1M117 462.5h1M117 443.5h1M117 425.5h1M117 406.5h1M117 387.5h1M117 368.5h1M117 349.5h1M117 330.5h1M117 312.5h1M117 293.5h1M117 274.5h1M117 255.5h1M117 236.5h1M117 218.5h1M117 199.5h1M117 180.5h1M117 161.5h1M136 726.5h1M136 707.5h1M136 688.5h1M136 669.5h1M136 650.5h1M136 632.5h1M136 613.5h1M136 594.5h1M136 575.5h1M136 556.5h1M136 537.5h1M136 519.5h1M136 500.5h1M136 481.5h1M136 462.5h1M136 443.5h1M136 425.5h1M136 406.5h1M136 387.5h1M136 368.5h1M136 349.5h1M136 330.5h1M136 312.5h1M136 293.5h1M136 274.5h1M136 255.5h1M136 236.5h1M136 218.5h1M136 199.5h1M136 180.5h1M136 161.5h1M155 726.5h1M155 707.5h1M155 688.5h1M155 669.5h1M155 650.5h1M155 632.5h1M155 613.5h1M155 594.5h1M155 575.5h1M155 556.5h1M155 537.5h1M155 519.5h1M155 500.5h1M155 481.5h1M155 462.5h1M155 443.5h1M155 425.5h1M155 406.5h1M155 387.5h1M155 368.5h1M155 349.5h1M155 330.5h1M155 312.5h1M155 293.5h1M155 274.5h1M155 255.5h1M155 236.5h1M155 218.5h1M155 199.5h1M155 180.5h1M155 161.5h1M173 726.5h1M173 707.5h1M173 688.5h1M173 669.5h1M173 650.5h1M173 632.5h1M173 613.5h1M173 594.5h1M173 575.5h1M173 556.5h1M173 537.5h1M173 519.5h1M173 500.5h1M173 481.5h1M173 462.5h1M173 443.5h1M173 425.5h1M173 406.5h1M173 387.5h1M173 368.5h1M173 349.5h1M173 330.5h1M173 312.5h1M173 293.5h1M173 274.5h1M173 255.5h1M173 236.5h1M173 218.5h1M173 199.5h1M173 180.5h1M173 161.5h1M192 726.5h1M192 707.5h1M192 688.5h1M192 669.5h1M192 650.5h1M192 632.5h1M192 613.5h1M192 594.5h1M192 575.5h1M192 556.5h1M192 537.5h1M192 519.5h1M192 500.5h1M192 481.5h1M192 462.5h1M192 443.5h1M192 425.5h1M192 406.5h1M192 387.5h1M192 368.5h1M192 349.5h1M192 330.5h1M192 312.5h1M192 293.5h1M192 274.5h1M192 255.5h1M192 236.5h1M192 218.5h1M192 199.5h1M192 180.5h1M192 161.5h1M211 726.5h1M211 707.5h1M211 688.5h1M211 669.5h1M211 650.5h1M211 632.5h1M211 613.5h1M211 594.5h1M211 575.5h1M211 556.5h1M211 537.5h1M211 519.5h1M211 500.5h1M211 481.5h1M211 462.5h1M211 443.5h1M211 425.5h1M211 406.5h1M211 387.5h1M211 368.5h1M211 349.5h1M211 330.5h1M211 312.5h1M211 293.5h1M211 274.5h1M211 255.5h1M211 236.5h1M211 218.5h1M211 199.5h1M211 180.5h1M211 161.5h1M230 726.5h1M230 707.5h1M230 688.5h1M230 669.5h1M230 650.5h1M230 632.5h1M230 613.5h1M230 594.5h1M230 575.5h1M230 556.5h1M230 537.5h1M230 519.5h1M230 500.5h1M230 481.5h1M230 462.5h1M230 443.5h1M230 425.5h1M230 406.5h1M230 387.5h1M230 368.5h1M230 349.5h1M230 330.5h1M230 312.5h1M230 293.5h1M230 274.5h1M230 255.5h1M230 236.5h1M230 218.5h1M230 199.5h1M230 180.5h1M230 161.5h1M249 726.5h1M249 707.5h1M249 688.5h1M249 669.5h1M249 650.5h1M249 632.5h1M249 613.5h1M249 594.5h1M249 575.5h1M249 556.5h1M249 537.5h1M249 519.5h1M249 500.5h1M249 481.5h1M249 462.5h1M249 443.5h1M249 425.5h1M249 406.5h1M249 387.5h1M249 368.5h1M249 349.5h1M249 330.5h1M249 312.5h1M249 293.5h1M249 274.5h1M249 255.5h1M249 236.5h1M249 218.5h1M249 199.5h1M249 180.5h1M249 161.5h1M267 726.5h1M267 707.5h1M267 688.5h1M267 669.5h1M267 650.5h1M267 632.5h1M267 613.5h1M267 594.5h1M267 575.5h1M267 556.5h1M267 537.5h1M267 519.5h1M267 500.5h1M267 481.5h1M267 462.5h1M267 443.5h1M267 425.5h1M267 406.5h1M267 387.5h1M267 368.5h1M267 349.5h1M267 330.5h1M267 312.5h1M267 293.5h1M267 274.5h1M267 255.5h1M267 236.5h1M267 218.5h1M267 199.5h1M267 180.5h1M267 161.5h1M286 726.5h1M286 707.5h1M286 688.5h1M286 669.5h1M286 650.5h1M286 632.5h1M286 613.5h1M286 594.5h1M286 575.5h1M286 556.5h1M286 537.5h1M286 519.5h1M286 500.5h1M286 481.5h1M286 462.5h1M286 443.5h1M286 425.5h1M286 406.5h1M286 387.5h1M286 368.5h1M286 349.5h1M286 330.5h1M286 312.5h1M286 293.5h1M286 274.5h1M286 255.5h1M286 236.5h1M286 218.5h1M286 199.5h1M286 180.5h1M286 161.5h1M305 726.5h1M305 707.5h1M305 688.5h1M305 669.5h1M305 650.5h1M305 632.5h1M305 613.5h1M305 594.5h1M305 575.5h1M305 556.5h1M305 537.5h1M305 519.5h1M305 500.5h1M305 481.5h1M305 462.5h1M305 443.5h1M305 425.5h1M305 406.5h1M305 387.5h1M305 368.5h1M305 349.5h1M305 330.5h1M305 312.5h1M305 293.5h1M305 274.5h1M305 255.5h1M305 236.5h1M305 218.5h1M305 199.5h1M305 180.5h1M305 161.5h1M324 726.5h1M324 707.5h1M324 688.5h1M324 669.5h1M324 650.5h1M324 632.5h1M324 613.5h1M324 594.5h1M324 575.5h1M324 556.5h1M324 537.5h1M324 519.5h1M324 500.5h1M324 481.5h1M324 462.5h1M324 443.5h1M324 425.5h1M324 406.5h1M324 387.5h1M324 368.5h1M324 349.5h1M324 330.5h1M324 312.5h1M324 293.5h1M324 274.5h1M324 255.5h1M324 236.5h1M324 218.5h1M324 199.5h1M324 180.5h1M324 161.5h1M343 726.5h1M343 707.5h1M343 688.5h1M343 669.5h1M343 650.5h1M343 632.5h1M343 613.5h1M343 594.5h1M343 575.5h1M343 556.5h1M343 537.5h1M343 519.5h1M343 500.5h1M343 481.5h1M343 462.5h1M343 443.5h1M343 425.5h1M343 406.5h1M343 387.5h1M343 368.5h1M343 349.5h1M343 330.5h1M343 312.5h1M343 293.5h1M343 274.5h1M343 255.5h1M343 236.5h1M343 218.5h1M343 199.5h1M343 180.5h1M343 161.5h1M362 726.5h1M362 707.5h1M362 688.5h1M362 669.5h1M362 650.5h1M362 632.5h1M362 613.5h1M362 594.5h1M362 575.5h1M362 556.5h1M362 537.5h1M362 519.5h1M362 500.5h1M362 481.5h1M362 462.5h1M362 443.5h1M362 425.5h1M362 406.5h1M362 387.5h1M362 368.5h1M362 349.5h1M362 330.5h1M362 312.5h1M362 293.5h1M362 274.5h1M362 255.5h1M362 236.5h1M362 218.5h1M362 199.5h1M362 180.5h1M362 161.5h1M380 726.5h1M380 707.5h1M380 688.5h1M380 669.5h1M380 650.5h1M380 632.5h1M380 613.5h1M380 594.5h1M380 575.5h1M380 556.5h1M380 537.5h1M380 519.5h1M380 500.5h1M380 481.5h1M380 462.5h1M380 443.5h1M380 425.5h1M380 406.5h1M380 387.5h1M380 368.5h1M380 349.5h1M380 330.5h1M380 312.5h1M380 293.5h1M380 274.5h1M380 255.5h1M380 236.5h1M380 218.5h1M380 199.5h1M380 180.5h1M380 161.5h1M399 726.5h1M399 707.5h1M399 688.5h1M399 669.5h1M399 650.5h1M399 632.5h1M399 613.5h1M399 594.5h1M399 575.5h1M399 556.5h1M399 537.5h1M399 519.5h1M399 500.5h1M399 481.5h1M399 462.5h1M399 443.5h1M399 425.5h1M399 406.5h1M399 387.5h1M399 368.5h1M399 349.5h1M399 330.5h1M399 312.5h1M399 293.5h1M399 274.5h1M399 255.5h1M399 236.5h1M399 218.5h1M399 199.5h1M399 180.5h1M399 161.5h1M418 726.5h1M418 707.5h1M418 688.5h1M418 669.5h1M418 650.5h1M418 632.5h1M418 613.5h1M418 594.5h1M418 575.5h1M418 556.5h1M418 537.5h1M418 519.5h1M418 500.5h1M418 481.5h1M418 462.5h1M418 443.5h1M418 425.5h1M418 406.5h1M418 387.5h1M418 368.5h1M418 349.5h1M418 330.5h1M418 312.5h1M418 293.5h1M418 274.5h1M418 255.5h1M418 236.5h1M418 218.5h1M418 199.5h1M418 180.5h1M418 161.5h1M437 726.5h1M437 707.5h1M437 688.5h1M437 669.5h1M437 650.5h1M437 632.5h1M437 613.5h1M437 594.5h1M437 575.5h1M437 556.5h1M437 537.5h1M437 519.5h1M437 500.5h1M437 481.5h1M437 462.5h1M437 443.5h1M437 425.5h1M437 406.5h1M437 387.5h1M437 368.5h1M437 349.5h1M437 330.5h1M437 312.5h1M437 293.5h1M437 274.5h1M437 255.5h1M437 236.5h1M437 218.5h1M437 199.5h1M437 180.5h1M437 161.5h1M456 726.5h1M456 707.5h1M456 688.5h1M456 669.5h1M456 650.5h1M456 632.5h1M456 613.5h1M456 594.5h1M456 575.5h1M456 556.5h1M456 537.5h1M456 519.5h1M456 500.5h1M456 481.5h1M456 462.5h1M456 443.5h1M456 425.5h1M456 406.5h1M456 387.5h1M456 368.5h1M456 349.5h1M456 330.5h1M456 312.5h1M456 293.5h1M456 274.5h1M456 255.5h1M456 236.5h1M456 218.5h1M456 199.5h1M456 180.5h1M456 161.5h1M474 726.5h1M474 707.5h1M474 688.5h1M474 669.5h1M474 650.5h1M474 632.5h1M474 613.5h1M474 594.5h1M474 575.5h1M474 556.5h1M474 537.5h1M474 519.5h1M474 500.5h1M474 481.5h1M474 462.5h1M474 443.5h1M474 425.5h1M474 406.5h1M474 387.5h1M474 368.5h1M474 349.5h1M474 330.5h1M474 312.5h1M474 293.5h1M474 274.5h1M474 255.5h1M474 236.5h1M474 218.5h1M474 199.5h1M474 180.5h1M474 161.5h1M493 726.5h1M493 707.5h1M493 688.5h1M493 669.5h1M493 650.5h1M493 632.5h1M493 613.5h1M493 594.5h1M493 575.5h1M493 556.5h1M493 537.5h1M493 519.5h1M493 500.5h1M493 481.5h1M493 462.5h1M493 443.5h1M493 425.5h1M493 406.5h1M493 387.5h1M493 368.5h1M493 349.5h1M493 330.5h1M493 312.5h1M493 293.5h1M493 274.5h1M493 255.5h1M493 236.5h1M493 218.5h1M493 199.5h1M493 180.5h1M493 161.5h1M512 726.5h1M512 707.5h1M512 688.5h1M512 669.5h1M512 650.5h1M512 632.5h1M512 613.5h1M512 594.5h1M512 575.5h1M512 556.5h1M512 537.5h1M512 519.5h1M512 500.5h1M512 481.5h1M512 462.5h1M512 443.5h1M512 425.5h1M512 406.5h1M512 387.5h1M512 368.5h1M512 349.5h1M512 330.5h1M512 312.5h1M512 293.5h1M512 274.5h1M512 255.5h1M512 236.5h1M512 218.5h1M512 199.5h1M512 180.5h1M512 161.5h1M531 726.5h1M531 707.5h1M531 688.5h1M531 669.5h1M531 650.5h1M531 632.5h1M531 613.5h1M531 594.5h1M531 575.5h1M531 556.5h1M531 537.5h1M531 519.5h1M531 500.5h1M531 481.5h1M531 462.5h1M531 443.5h1M531 425.5h1M531 406.5h1M531 387.5h1M531 368.5h1M531 349.5h1M531 330.5h1M531 312.5h1M531 293.5h1M531 274.5h1M531 255.5h1M531 236.5h1M531 218.5h1M531 199.5h1M531 180.5h1M531 161.5h1M550 726.5h1M550 707.5h1M550 688.5h1M550 669.5h1M550 650.5h1M550 632.5h1M550 613.5h1M550 594.5h1M550 575.5h1M550 556.5h1M550 537.5h1M550 519.5h1M550 500.5h1M550 481.5h1M550 462.5h1M550 443.5h1M550 425.5h1M550 406.5h1M550 387.5h1M550 368.5h1M550 349.5h1M550 330.5h1M550 312.5h1M550 293.5h1M550 274.5h1M550 255.5h1M550 236.5h1M550 218.5h1M550 199.5h1M550 180.5h1M550 161.5h1M569 726.5h1M569 707.5h1M569 688.5h1M569 669.5h1M569 650.5h1M569 632.5h1M569 613.5h1M569 594.5h1M569 575.5h1M569 556.5h1M569 537.5h1M569 519.5h1M569 500.5h1M569 481.5h1M569 462.5h1M569 443.5h1M569 425.5h1M569 406.5h1M569 387.5h1M569 368.5h1M569 349.5h1M569 330.5h1M569 312.5h1M569 293.5h1M569 274.5h1M569 255.5h1M569 236.5h1M569 218.5h1M569 199.5h1M569 180.5h1M569 161.5h1M587 726.5h1M587 707.5h1M587 688.5h1M587 669.5h1M587 650.5h1M587 632.5h1M587 613.5h1M587 594.5h1M587 575.5h1M587 556.5h1M587 537.5h1M587 519.5h1M587 500.5h1M587 481.5h1M587 462.5h1M587 443.5h1M587 425.5h1M587 406.5h1M587 387.5h1M587 368.5h1M587 349.5h1M587 330.5h1M587 312.5h1M587 293.5h1M587 274.5h1M587 255.5h1M587 236.5h1M587 218.5h1M587 199.5h1M587 180.5h1M587 161.5h1M606 726.5h1M606 707.5h1M606 688.5h1M606 669.5h1M606 650.5h1M606 632.5h1M606 613.5h1M606 594.5h1M606 575.5h1M606 556.5h1M606 537.5h1M606 519.5h1M606 500.5h1M606 481.5h1M606 462.5h1M606 443.5h1M606 425.5h1M606 406.5h1M606 387.5h1M606 368.5h1M606 349.5h1M606 330.5h1M606 312.5h1M606 293.5h1M606 274.5h1M606 255.5h1M606 236.5h1M606 218.5h1M606 199.5h1M606 180.5h1M606 161.5h1M625 726.5h1M625 707.5h1M625 688.5h1M625 669.5h1M625 650.5h1M625 632.5h1M625 613.5h1M625 594.5h1M625 575.5h1M625 556.5h1M625 537.5h1M625 519.5h1M625 500.5h1M625 481.5h1M625 462.5h1M625 443.5h1M625 425.5h1M625 406.5h1M625 387.5h1M625 368.5h1M625 349.5h1M625 330.5h1M625 312.5h1M625 293.5h1M625 274.5h1M625 255.5h1M625 236.5h1M625 218.5h1M625 199.5h1M625 180.5h1M625 161.5h1M644 726.5h1M644 707.5h1M644 688.5h1M644 669.5h1M644 650.5h1M644 632.5h1M644 613.5h1M644 594.5h1M644 575.5h1M644 556.5h1M644 537.5h1M644 519.5h1M644 500.5h1M644 481.5h1M644 462.5h1M644 443.5h1M644 425.5h1M644 406.5h1M644 387.5h1M644 368.5h1M644 349.5h1M644 330.5h1M644 312.5h1M644 293.5h1M644 274.5h1M644 255.5h1M644 236.5h1M644 218.5h1M644 199.5h1M644 180.5h1M644 161.5h1M663 726.5h1M663 707.5h1M663 688.5h1M663 669.5h1M663 650.5h1M663 632.5h1M663 613.5h1M663 594.5h1M663 575.5h1M663 556.5h1M663 537.5h1M663 519.5h1M663 500.5h1M663 481.5h1M663 462.5h1M663 443.5h1M663 425.5h1M663 406.5h1M663 387.5h1M663 368.5h1M663 349.5h1M663 330.5h1M663 312.5h1M663 293.5h1M663 274.5h1M663 255.5h1M663 236.5h1M663 218.5h1M663 199.5h1M663 180.5h1M663 161.5h1M681 726.5h1M681 707.5h1M681 688.5h1M681 669.5h1M681 650.5h1M681 632.5h1M681 613.5h1M681 594.5h1M681 575.5h1M681 556.5h1M681 537.5h1M681 519.5h1M681 500.5h1M681 481.5h1M681 462.5h1M681 443.5h1M681 425.5h1M681 406.5h1M681 387.5h1M681 368.5h1M681 349.5h1M681 330.5h1M681 312.5h1M681 293.5h1M681 274.5h1M681 255.5h1M681 236.5h1M681 218.5h1M681 199.5h1M681 180.5h1M681 161.5h1M700 726.5h1M700 707.5h1M700 688.5h1M700 669.5h1M700 650.5h1M700 632.5h1M700 613.5h1M700 594.5h1M700 575.5h1M700 556.5h1M700 537.5h1M700 519.5h1M700 500.5h1M700 481.5h1M700 462.5h1M700 443.5h1M700 425.5h1M700 406.5h1M700 387.5h1M700 368.5h1M700 349.5h1M700 330.5h1M700 312.5h1M700 293.5h1M700 274.5h1M700 255.5h1M700 236.5h1M700 218.5h1M700 199.5h1M700 180.5h1M700 161.5h1M719 726.5h1M719 707.5h1M719 688.5h1M719 669.5h1M719 650.5h1M719 632.5h1M719 613.5h1M719 594.5h1M719 575.5h1M719 556.5h1M719 537.5h1M719 519.5h1M719 500.5h1M719 481.5h1M719 462.5h1M719 443.5h1M719 425.5h1M719 406.5h1M719 387.5h1M719 368.5h1M719 349.5h1M719 330.5h1M719 312.5h1M719 293.5h1M719 274.5h1M719 255.5h1M719 236.5h1M719 218.5h1M719 199.5h1M719 180.5h1M719 161.5h1M738 726.5h1M738 707.5h1M738 688.5h1M738 669.5h1M738 650.5h1M738 632.5h1M738 613.5h1M738 594.5h1M738 575.5h1M738 556.5h1M738 537.5h1M738 519.5h1M738 500.5h1M738 481.5h1M738 462.5h1M738 443.5h1M738 425.5h1M738 406.5h1M738 387.5h1M738 368.5h1M738 349.5h1M738 330.5h1M738 312.5h1M738 293.5h1M738 274.5h1M738 255.5h1M738 236.5h1M738 218.5h1M738 199.5h1M738 180.5h1M738 161.5h1M757 726.5h1M757 707.5h1M757 688.5h1M757 669.5h1M757 650.5h1M757 632.5h1M757 613.5h1M757 594.5h1M757 575.5h1M757 556.5h1M757 537.5h1M757 519.5h1M757 500.5h1M757 481.5h1M757 462.5h1M757 443.5h1M757 425.5h1M757 406.5h1M757 387.5h1M757 368.5h1M757 349.5h1M757 330.5h1M757 312.5h1M757 293.5h1M757 274.5h1M757 255.5h1M757 236.5h1M757 218.5h1M757 199.5h1M757 180.5h1M757 161.5h1M775 726.5h1M775 707.5h1M775 688.5h1M775 669.5h1M775 650.5h1M775 632.5h1M775 613.5h1M775 594.5h1M775 575.5h1M775 556.5h1M775 537.5h1M775 519.5h1M775 500.5h1M775 481.5h1M775 462.5h1M775 443.5h1M775 425.5h1M775 406.5h1M775 387.5h1M775 368.5h1M775 349.5h1M775 330.5h1M775 312.5h1M775 293.5h1M775 274.5h1M775 255.5h1M775 236.5h1M775 218.5h1M775 199.5h1M775 180.5h1M775 161.5h1M794 726.5h1M794 707.5h1M794 688.5h1M794 669.5h1M794 650.5h1M794 632.5h1M794 613.5h1M794 594.5h1M794 575.5h1M794 556.5h1M794 537.5h1M794 519.5h1M794 500.5h1M794 481.5h1M794 462.5h1M794 443.5h1M794 425.5h1M794 406.5h1M794 387.5h1M794 368.5h1M794 349.5h1M794 330.5h1M794 312.5h1M794 293.5h1M794 274.5h1M794 255.5h1M794 236.5h1M794 218.5h1M794 199.5h1M794 180.5h1M794 161.5h1M813 726.5h1M813 707.5h1M813 688.5h1M813 669.5h1M813 650.5h1M813 632.5h1M813 613.5h1M813 594.5h1M813 575.5h1M813 556.5h1M813 537.5h1M813 519.5h1M813 500.5h1M813 481.5h1M813 462.5h1M813 443.5h1M813 425.5h1M813 406.5h1M813 387.5h1M813 368.5h1M813 349.5h1M813 330.5h1M813 312.5h1M813 293.5h1M813 274.5h1M813 255.5h1M813 236.5h1M813 218.5h1M813 199.5h1M813 180.5h1M813 161.5h1M832 726.5h1M832 707.5h1M832 688.5h1M832 669.5h1M832 650.5h1M832 632.5h1M832 613.5h1M832 594.5h1M832 575.5h1M832 556.5h1M832 537.5h1M832 519.5h1M832 500.5h1M832 481.5h1M832 462.5h1M832 443.5h1M832 425.5h1M832 406.5h1M832 387.5h1M832 368.5h1M832 349.5h1M832 330.5h1M832 312.5h1M832 293.5h1M832 274.5h1M832 255.5h1M832 236.5h1M832 218.5h1M832 199.5h1M832 180.5h1M832 161.5h1M851 726.5h1M851 707.5h1M851 688.5h1M851 669.5h1M851 650.5h1M851 632.5h1M851 613.5h1M851 594.5h1M851 575.5h1M851 556.5h1M851 537.5h1M851 519.5h1M851 500.5h1M851 481.5h1M851 462.5h1M851 443.5h1M851 425.5h1M851 406.5h1M851 387.5h1M851 368.5h1M851 349.5h1M851 330.5h1M851 312.5h1M851 293.5h1M851 274.5h1M851 255.5h1M851 236.5h1M851 218.5h1M851 199.5h1M851 180.5h1M851 161.5h1M870 726.5h1M870 707.5h1M870 688.5h1M870 669.5h1M870 650.5h1M870 632.5h1M870 613.5h1M870 594.5h1M870 575.5h1M870 556.5h1M870 537.5h1M870 519.5h1M870 500.5h1M870 481.5h1M870 462.5h1M870 443.5h1M870 425.5h1M870 406.5h1M870 387.5h1M870 368.5h1M870 349.5h1M870 330.5h1M870 312.5h1M870 293.5h1M870 274.5h1M870 255.5h1M870 236.5h1M870 218.5h1M870 199.5h1M870 180.5h1M870 161.5h1M888 726.5h1M888 707.5h1M888 688.5h1M888 669.5h1M888 650.5h1M888 632.5h1M888 613.5h1M888 594.5h1M888 575.5h1M888 556.5h1M888 537.5h1M888 519.5h1M888 500.5h1M888 481.5h1M888 462.5h1M888 443.5h1M888 425.5h1M888 406.5h1M888 387.5h1M888 368.5h1M888 349.5h1M888 330.5h1M888 312.5h1M888 293.5h1M888 274.5h1M888 255.5h1M888 236.5h1M888 218.5h1M888 199.5h1M888 180.5h1M888 161.5h1M907 726.5h1M907 707.5h1M907 688.5h1M907 669.5h1M907 650.5h1M907 632.5h1M907 613.5h1M907 594.5h1M907 575.5h1M907 556.5h1M907 537.5h1M907 519.5h1M907 500.5h1M907 481.5h1M907 462.5h1M907 443.5h1M907 425.5h1M907 406.5h1M907 387.5h1M907 368.5h1M907 349.5h1M907 330.5h1M907 312.5h1M907 293.5h1M907 274.5h1M907 255.5h1M907 236.5h1M907 218.5h1M907 199.5h1M907 180.5h1M907 161.5h1M926 726.5h1M926 707.5h1M926 688.5h1M926 669.5h1M926 650.5h1M926 632.5h1M926 613.5h1M926 594.5h1M926 575.5h1M926 556.5h1M926 537.5h1M926 519.5h1M926 500.5h1M926 481.5h1M926 462.5h1M926 443.5h1M926 425.5h1M926 406.5h1M926 387.5h1M926 368.5h1M926 349.5h1M926 330.5h1M926 312.5h1M926 293.5h1M926 274.5h1M926 255.5h1M926 236.5h1M926 218.5h1M926 199.5h1M926 180.5h1M926 161.5h1M945 726.5h1M945 707.5h1M945 688.5h1M945 669.5h1M945 650.5h1M945 632.5h1M945 613.5h1M945 594.5h1M945 575.5h1M945 556.5h1M945 537.5h1M945 519.5h1M945 500.5h1M945 481.5h1M945 462.5h1M945 443.5h1M945 425.5h1M945 406.5h1M945 387.5h1M945 368.5h1M945 349.5h1M945 330.5h1M945 312.5h1M945 293.5h1M945 274.5h1M945 255.5h1M945 236.5h1M945 218.5h1M945 199.5h1M945 180.5h1M945 161.5h1M964 726.5h1M964 707.5h1M964 688.5h1M964 669.5h1M964 650.5h1M964 632.5h1M964 613.5h1M964 594.5h1M964 575.5h1M964 556.5h1M964 537.5h1M964 519.5h1M964 500.5h1M964 481.5h1M964 462.5h1M964 443.5h1M964 425.5h1M964 406.5h1M964 387.5h1M964 368.5h1M964 349.5h1M964 330.5h1M964 312.5h1M964 293.5h1M964 274.5h1M964 255.5h1M964 236.5h1M964 218.5h1M964 199.5h1M964 180.5h1M964 161.5h1M982 726.5h1M982 707.5h1M982 688.5h1M982 669.5h1M982 650.5h1M982 632.5h1M982 613.5h1M982 594.5h1M982 575.5h1M982 556.5h1M982 537.5h1M982 519.5h1M982 500.5h1M982 481.5h1M982 462.5h1M982 443.5h1M982 425.5h1M982 406.5h1M982 387.5h1M982 368.5h1M982 349.5h1M982 330.5h1M982 312.5h1M982 293.5h1M982 274.5h1M982 255.5h1M982 236.5h1M982 218.5h1M982 199.5h1M982 180.5h1M982 161.5h1M1001 726.5h1M1001 707.5h1M1001 688.5h1M1001 669.5h1M1001 650.5h1M1001 632.5h1M1001 613.5h1M1001 594.5h1M1001 575.5h1M1001 556.5h1M1001 537.5h1M1001 519.5h1M1001 500.5h1M1001 481.5h1M1001 462.5h1M1001 443.5h1M1001 425.5h1M1001 406.5h1M1001 387.5h1M1001 368.5h1M1001 349.5h1M1001 330.5h1M1001 312.5h1M1001 293.5h1M1001 274.5h1M1001 255.5h1M1001 236.5h1M1001 218.5h1M1001 199.5h1M1001 180.5h1M1001 161.5h1M1020 726.5h1M1020 707.5h1M1020 688.5h1M1020 669.5h1M1020 650.5h1M1020 632.5h1M1020 613.5h1M1020 594.5h1M1020 575.5h1M1020 556.5h1M1020 537.5h1M1020 519.5h1M1020 500.5h1M1020 481.5h1M1020 462.5h1M1020 443.5h1M1020 425.5h1M1020 406.5h1M1020 387.5h1M1020 368.5h1M1020 349.5h1M1020 330.5h1M1020 312.5h1M1020 293.5h1M1020 274.5h1M1020 255.5h1M1020 236.5h1M1020 218.5h1M1020 199.5h1M1020 180.5h1M1020 161.5h1M1039 726.5h1M1039 707.5h1M1039 688.5h1M1039 669.5h1M1039 650.5h1M1039 632.5h1M1039 613.5h1M1039 594.5h1M1039 575.5h1M1039 556.5h1M1039 537.5h1M1039 519.5h1M1039 500.5h1M1039 481.5h1M1039 462.5h1M1039 443.5h1M1039 425.5h1M1039 406.5h1M1039 387.5h1M1039 368.5h1M1039 349.5h1M1039 330.5h1M1039 312.5h1M1039 293.5h1M1039 274.5h1M1039 255.5h1M1039 236.5h1M1039 218.5h1M1039 199.5h1M1039 180.5h1M1039 161.5h1M1058 726.5h1M1058 707.5h1M1058 688.5h1M1058 669.5h1M1058 650.5h1M1058 632.5h1M1058 613.5h1M1058 594.5h1M1058 575.5h1M1058 556.5h1M1058 537.5h1M1058 519.5h1M1058 500.5h1M1058 481.5h1M1058 462.5h1M1058 443.5h1M1058 425.5h1M1058 406.5h1M1058 387.5h1M1058 368.5h1M1058 349.5h1M1058 330.5h1M1058 312.5h1M1058 293.5h1M1058 274.5h1M1058 255.5h1M1058 236.5h1M1058 218.5h1M1058 199.5h1M1058 180.5h1M1058 161.5h1M1077 726.5h1M1077 707.5h1M1077 688.5h1M1077 669.5h1M1077 650.5h1M1077 632.5h1M1077 613.5h1M1077 594.5h1M1077 575.5h1M1077 556.5h1M1077 537.5h1M1077 519.5h1M1077 500.5h1M1077 481.5h1M1077 462.5h1M1077 443.5h1M1077 425.5h1M1077 406.5h1M1077 387.5h1M1077 368.5h1M1077 349.5h1M1077 330.5h1M1077 312.5h1M1077 293.5h1M1077 274.5h1M1077 255.5h1M1077 236.5h1M1077 218.5h1M1077 199.5h1M1077 180.5h1M1077 161.5h1M1095 726.5h1M1095 707.5h1M1095 688.5h1M1095 669.5h1M1095 650.5h1M1095 632.5h1M1095 613.5h1M1095 594.5h1M1095 575.5h1M1095 556.5h1M1095 537.5h1M1095 519.5h1M1095 500.5h1M1095 481.5h1M1095 462.5h1M1095 443.5h1M1095 425.5h1M1095 406.5h1M1095 387.5h1M1095 368.5h1M1095 349.5h1M1095 330.5h1M1095 312.5h1M1095 293.5h1M1095 274.5h1M1095 255.5h1M1095 236.5h1M1095 218.5h1M1095 199.5h1M1095 180.5h1M1095 161.5h1M1114 726.5h1M1114 707.5h1M1114 688.5h1M1114 669.5h1M1114 650.5h1M1114 632.5h1M1114 613.5h1M1114 594.5h1M1114 575.5h1M1114 556.5h1M1114 537.5h1M1114 519.5h1M1114 500.5h1M1114 481.5h1M1114 462.5h1M1114 443.5h1M1114 425.5h1M1114 406.5h1M1114 387.5h1M1114 368.5h1M1114 349.5h1M1114 330.5h1M1114 312.5h1M1114 293.5h1M1114 274.5h1M1114 255.5h1M1114 236.5h1M1114 218.5h1M1114 199.5h1M1114 180.5h1M1114 161.5h1" stroke="#484848" stroke-width="1" fill="none" shape-rendering="crispEdges"/><path d="M230.5 155V731.5M418.5 155V731.5M606.5 155V731.5M794.5 155V731.5M982.5 155V731.5M95 631.5H1118M95 443.5H1118M95 255.5H1118" stroke="#242424" stroke-width="1" fill="none"/><path d="M398 631.5H439M418.5 611.1V652.1" stroke="#a40000" stroke-width="1"/><circle cx="418.5" cy="631.5" r="5" fill="none" stroke="#900000" stroke-width="1"/><circle cx="606.65" cy="443.45000000000005" r="188.15" fill="none" stroke="#d4d4d4" stroke-width=".85"/><circle cx="606.65" cy="443.45000000000005" r="169.34" fill="none" stroke="#d4d4d4" stroke-width=".85"/><path d="M606.6 281.2L602.2 291L606.6 300.7L611 291zM687.8 302.9L679.1 309.2L678 319.8L686.7 313.6zM747.2 362.3L736.5 363.4L730.3 372.1L740.9 371zM769 443.5L759.1 439.1L749.5 443.5L759.1 447.9zM747.2 524.6L740.9 515.9L730.3 514.9L736.5 523.5zM687.8 584L686.7 573.3L678 567.1L679.1 577.7zM606.6 605.8L611 596L606.6 586.2L602.2 596zM525.5 584L534.2 577.7L535.2 567.1L526.6 573.3zM466.1 524.6L476.8 523.5L483 514.9L472.4 515.9zM444.3 443.5L454.1 447.9L463.8 443.5L454.1 439.1zM466.1 362.3L472.4 371L483 372.1L476.8 363.4zM525.5 302.9L526.6 313.6L535.2 319.8L534.2 309.2z" stroke="#67332a" stroke-width="1" fill="none"/><circle cx="606.65" cy="443.45" r="158.4" fill="none" stroke="#5a2a22" stroke-width="1"/><circle cx="606.65" cy="443.45" r="146.9" fill="none" stroke="#5a2a22" stroke-width="1"/><text x="667.9" y="348.8" font-family="Liberation Serif,serif" font-size="34" text-anchor="middle" fill="#67332a">1</text><text x="712.8" y="393.7" font-family="Liberation Serif,serif" font-size="34" text-anchor="middle" fill="#67332a">2</text><text x="729.2" y="455" font-family="Liberation Serif,serif" font-size="34" text-anchor="middle" fill="#67332a">3</text><text x="712.8" y="516.2" font-family="Liberation Serif,serif" font-size="34" text-anchor="middle" fill="#67332a">4</text><text x="667.9" y="561.1" font-family="Liberation Serif,serif" font-size="34" text-anchor="middle" fill="#67332a">5</text><text x="606.6" y="577.6" font-family="Liberation Serif,serif" font-size="34" text-anchor="middle" fill="#67332a">6</text><text x="545.3" y="561.1" font-family="Liberation Serif,serif" font-size="34" text-anchor="middle" fill="#67332a">7</text><text x="500.5" y="516.3" font-family="Liberation Serif,serif" font-size="34" text-anchor="middle" fill="#67332a">8</text><text x="484" y="455" font-family="Liberation Serif,serif" font-size="34" text-anchor="middle" fill="#67332a">9</text><text x="500.5" y="393.7" font-family="Liberation Serif,serif" font-size="34" text-anchor="middle" fill="#67332a">10</text><text x="545.3" y="348.8" font-family="Liberation Serif,serif" font-size="34" text-anchor="middle" fill="#67332a">11</text><text x="606.6" y="332.4" font-family="Liberation Serif,serif" font-size="34" text-anchor="middle" fill="#67332a">12</text><rect x="602.2" y="382.3" width="8.8" height="8.8" fill="#c6001e" stroke="#a06070" stroke-width="1"/><rect x="617.6" y="293" width="8.8" height="8.8" fill="#c6001e" stroke="#a06070" stroke-width="1"/><rect x="608.2" y="382.6" width="8.8" height="8.8" fill="#c6001e" stroke="#a06070" stroke-width="1"/><rect x="632.8" y="295.4" width="8.8" height="8.8" fill="#c6001e" stroke="#a06070" stroke-width="1"/><rect x="614.1" y="383.5" width="8.8" height="8.8" fill="#c6001e" stroke="#a06070" stroke-width="1"/><rect x="647.6" y="299.3" width="8.8" height="8.8" fill="#c6001e" stroke="#a06070" stroke-width="1"/><rect x="619.8" y="385" width="8.8" height="8.8" fill="#c6001e" stroke="#a06070" stroke-width="1"/><rect x="662" y="304.9" width="8.8" height="8.8" fill="#c6001e" stroke="#a06070" stroke-width="1"/><rect x="625.4" y="387.2" width="8.8" height="8.8" fill="#c6001e" stroke="#a06070" stroke-width="1"/><rect x="630.6" y="389.9" width="8.8" height="8.8" fill="#c6001e" stroke="#a06070" stroke-width="1"/><rect x="688.6" y="320.2" width="8.8" height="8.8" fill="#c6001e" stroke="#a06070" stroke-width="1"/><rect x="635.6" y="393.1" width="8.8" height="8.8" fill="#c6001e" stroke="#a06070" stroke-width="1"/><rect x="700.5" y="329.9" width="8.8" height="8.8" fill="#c6001e" stroke="#a06070" stroke-width="1"/><rect x="640.3" y="396.8" width="8.8" height="8.8" fill="#c6001e" stroke="#a06070" stroke-width="1"/><rect x="711.4" y="340.8" width="8.8" height="8.8" fill="#c6001e" stroke="#a06070" stroke-width="1"/><rect x="644.5" y="401" width="8.8" height="8.8" fill="#c6001e" stroke="#a06070" stroke-width="1"/><rect x="721.1" y="352.7" width="8.8" height="8.8" fill="#c6001e" stroke="#a06070" stroke-width="1"/><rect x="648.2" y="405.7" width="8.8" height="8.8" fill="#c6001e" stroke="#a06070" stroke-width="1"/><rect x="651.4" y="410.7" width="8.8" height="8.8" fill="#c6001e" stroke="#a06070" stroke-width="1"/><rect x="736.4" y="379.3" width="8.8" height="8.8" fill="#c6001e" stroke="#a06070" stroke-width="1"/><rect x="654.1" y="415.9" width="8.8" height="8.8" fill="#c6001e" stroke="#a06070" stroke-width="1"/><rect x="742" y="393.7" width="8.8" height="8.8" fill="#c6001e" stroke="#a06070" stroke-width="1"/><rect x="656.3" y="421.5" width="8.8" height="8.8" fill="#c6001e" stroke="#a06070" stroke-width="1"/><rect x="745.9" y="408.5" width="8.8" height="8.8" fill="#c6001e" stroke="#a06070" stroke-width="1"/><rect x="657.8" y="427.2" width="8.8" height="8.8" fill="#c6001e" stroke="#a06070" stroke-width="1"/><rect x="748.3" y="423.7" width="8.8" height="8.8" fill="#c6001e" stroke="#a06070" stroke-width="1"/><rect x="658.7" y="433.1" width="8.8" height="8.8" fill="#c6001e" stroke="#a06070" stroke-width="1"/><rect x="659" y="439.1" width="8.8" height="8.8" fill="#c6001e" stroke="#a06070" stroke-width="1"/><rect x="748.3" y="454.4" width="8.8" height="8.8" fill="#c6001e" stroke="#a06070" stroke-width="1"/><rect x="658.7" y="445" width="8.8" height="8.8" fill="#c6001e" stroke="#a06070" stroke-width="1"/><rect x="745.9" y="469.6" width="8.8" height="8.8" fill="#c6001e" stroke="#a06070" stroke-width="1"/><rect x="657.8" y="450.9" width="8.8" height="8.8" fill="#c6001e" stroke="#a06070" stroke-width="1"/><rect x="742" y="484.4" width="8.8" height="8.8" fill="#c6001e" stroke="#a06070" stroke-width="1"/><rect x="656.3" y="456.6" width="8.8" height="8.8" fill="#c6001e" stroke="#a06070" stroke-width="1"/><rect x="736.4" y="498.8" width="8.8" height="8.8" fill="#c6001e" stroke="#a06070" stroke-width="1"/><rect x="654.1" y="462.2" width="8.8" height="8.8" fill="#c6001e" stroke="#a06070" stroke-width="1"/><rect x="651.4" y="467.5" width="8.8" height="8.8" fill="#c6001e" stroke="#a06070" stroke-width="1"/><rect x="721.1" y="525.4" width="8.8" height="8.8" fill="#c6001e" stroke="#a06070" stroke-width="1"/><rect x="648.2" y="472.4" width="8.8" height="8.8" fill="#c6001e" stroke="#a06070" stroke-width="1"/><rect x="711.4" y="537.3" width="8.8" height="8.8" fill="#c6001e" stroke="#a06070" stroke-width="1"/><rect x="644.5" y="477.1" width="8.8" height="8.8" fill="#c6001e" stroke="#a06070" stroke-width="1"/><rect x="700.5" y="548.2" width="8.8" height="8.8" fill="#c6001e" stroke="#a06070" stroke-width="1"/><rect x="640.3" y="481.3" width="8.8" height="8.8" fill="#c6001e" stroke="#a06070" stroke-width="1"/><rect x="688.6" y="557.9" width="8.8" height="8.8" fill="#c6001e" stroke="#a06070" stroke-width="1"/><rect x="635.6" y="485" width="8.8" height="8.8" fill="#c6001e" stroke="#a06070" stroke-width="1"/><rect x="630.6" y="488.2" width="8.8" height="8.8" fill="#c6001e" stroke="#a06070" stroke-width="1"/><rect x="662" y="573.2" width="8.8" height="8.8" fill="#c6001e" stroke="#a06070" stroke-width="1"/><rect x="625.4" y="490.9" width="8.8" height="8.8" fill="#c6001e" stroke="#a06070" stroke-width="1"/><rect x="647.6" y="578.8" width="8.8" height="8.8" fill="#c6001e" stroke="#a06070" stroke-width="1"/><rect x="619.8" y="493.1" width="8.8" height="8.8" fill="#c6001e" stroke="#a06070" stroke-width="1"/><rect x="632.8" y="582.7" width="8.8" height="8.8" fill="#c6001e" stroke="#a06070" stroke-width="1"/><rect x="614.1" y="494.6" width="8.8" height="8.8" fill="#c6001e" stroke="#a06070" stroke-width="1"/><rect x="617.6" y="585.1" width="8.8" height="8.8" fill="#c6001e" stroke="#a06070" stroke-width="1"/><rect x="608.2" y="495.5" width="8.8" height="8.8" fill="#c6001e" stroke="#a06070" stroke-width="1"/><rect x="602.2" y="495.9" width="8.8" height="8.8" fill="#c6001e" stroke="#a06070" stroke-width="1"/><rect x="586.9" y="585.1" width="8.8" height="8.8" fill="#c6001e" stroke="#a06070" stroke-width="1"/><rect x="596.3" y="495.5" width="8.8" height="8.8" fill="#c6001e" stroke="#a06070" stroke-width="1"/><rect x="571.7" y="582.7" width="8.8" height="8.8" fill="#c6001e" stroke="#a06070" stroke-width="1"/><rect x="590.4" y="494.6" width="8.8" height="8.8" fill="#c6001e" stroke="#a06070" stroke-width="1"/><rect x="556.9" y="578.8" width="8.8" height="8.8" fill="#c6001e" stroke="#a06070" stroke-width="1"/><rect x="584.7" y="493.1" width="8.8" height="8.8" fill="#c6001e" stroke="#a06070" stroke-width="1"/><rect x="542.5" y="573.2" width="8.8" height="8.8" fill="#c6001e" stroke="#a06070" stroke-width="1"/><rect x="579.1" y="490.9" width="8.8" height="8.8" fill="#c6001e" stroke="#a06070" stroke-width="1"/><rect x="573.9" y="488.2" width="8.8" height="8.8" fill="#c6001e" stroke="#a06070" stroke-width="1"/><rect x="515.9" y="557.9" width="8.8" height="8.8" fill="#c6001e" stroke="#a06070" stroke-width="1"/><rect x="568.9" y="485" width="8.8" height="8.8" fill="#c6001e" stroke="#a06070" stroke-width="1"/><rect x="504" y="548.2" width="8.8" height="8.8" fill="#c6001e" stroke="#a06070" stroke-width="1"/><rect x="564.2" y="481.3" width="8.8" height="8.8" fill="#c6001e" stroke="#a06070" stroke-width="1"/><rect x="493.1" y="537.3" width="8.8" height="8.8" fill="#c6001e" stroke="#a06070" stroke-width="1"/><rect x="560" y="477.1" width="8.8" height="8.8" fill="#c6001e" stroke="#a06070" stroke-width="1"/><rect x="483.4" y="525.4" width="8.8" height="8.8" fill="#c6001e" stroke="#a06070" stroke-width="1"/><rect x="556.3" y="472.4" width="8.8" height="8.8" fill="#c6001e" stroke="#a06070" stroke-width="1"/><rect x="553.1" y="467.5" width="8.8" height="8.8" fill="#c6001e" stroke="#a06070" stroke-width="1"/><rect x="468.1" y="498.8" width="8.8" height="8.8" fill="#c6001e" stroke="#a06070" stroke-width="1"/><rect x="550.4" y="462.2" width="8.8" height="8.8" fill="#c6001e" stroke="#a06070" stroke-width="1"/><rect x="462.5" y="484.4" width="8.8" height="8.8" fill="#c6001e" stroke="#a06070" stroke-width="1"/><rect x="548.2" y="456.6" width="8.8" height="8.8" fill="#c6001e" stroke="#a06070" stroke-width="1"/><rect x="458.6" y="469.6" width="8.8" height="8.8" fill="#c6001e" stroke="#a06070" stroke-width="1"/><rect x="546.7" y="450.9" width="8.8" height="8.8" fill="#c6001e" stroke="#a06070" stroke-width="1"/><rect x="456.2" y="454.4" width="8.8" height="8.8" fill="#c6001e" stroke="#a06070" stroke-width="1"/><rect x="545.8" y="445" width="8.8" height="8.8" fill="#c6001e" stroke="#a06070" stroke-width="1"/><rect x="545.5" y="439.1" width="8.8" height="8.8" fill="#c6001e" stroke="#a06070" stroke-width="1"/><rect x="456.2" y="423.7" width="8.8" height="8.8" fill="#c6001e" stroke="#a06070" stroke-width="1"/><rect x="545.8" y="433.1" width="8.8" height="8.8" fill="#c6001e" stroke="#a06070" stroke-width="1"/><rect x="458.6" y="408.5" width="8.8" height="8.8" fill="#c6001e" stroke="#a06070" stroke-width="1"/><rect x="546.7" y="427.2" width="8.8" height="8.8" fill="#c6001e" stroke="#a06070" stroke-width="1"/><rect x="462.5" y="393.7" width="8.8" height="8.8" fill="#c6001e" stroke="#a06070" stroke-width="1"/><rect x="548.2" y="421.5" width="8.8" height="8.8" fill="#c6001e" stroke="#a06070" stroke-width="1"/><rect x="468.1" y="379.3" width="8.8" height="8.8" fill="#c6001e" stroke="#a06070" stroke-width="1"/><rect x="550.4" y="415.9" width="8.8" height="8.8" fill="#c6001e" stroke="#a06070" stroke-width="1"/><rect x="553.1" y="410.7" width="8.8" height="8.8" fill="#c6001e" stroke="#a06070" stroke-width="1"/><rect x="483.4" y="352.7" width="8.8" height="8.8" fill="#c6001e" stroke="#a06070" stroke-width="1"/><rect x="556.3" y="405.7" width="8.8" height="8.8" fill="#c6001e" stroke="#a06070" stroke-width="1"/><rect x="493.1" y="340.8" width="8.8" height="8.8" fill="#c6001e" stroke="#a06070" stroke-width="1"/><rect x="560" y="401" width="8.8" height="8.8" fill="#c6001e" stroke="#a06070" stroke-width="1"/><rect x="504" y="329.9" width="8.8" height="8.8" fill="#c6001e" stroke="#a06070" stroke-width="1"/><rect x="564.2" y="396.8" width="8.8" height="8.8" fill="#c6001e" stroke="#a06070" stroke-width="1"/><rect x="515.9" y="320.2" width="8.8" height="8.8" fill="#c6001e" stroke="#a06070" stroke-width="1"/><rect x="568.9" y="393.1" width="8.8" height="8.8" fill="#c6001e" stroke="#a06070" stroke-width="1"/><rect x="573.9" y="389.9" width="8.8" height="8.8" fill="#c6001e" stroke="#a06070" stroke-width="1"/><rect x="542.5" y="304.9" width="8.8" height="8.8" fill="#c6001e" stroke="#a06070" stroke-width="1"/><rect x="579.1" y="387.2" width="8.8" height="8.8" fill="#c6001e" stroke="#a06070" stroke-width="1"/><rect x="556.9" y="299.3" width="8.8" height="8.8" fill="#c6001e" stroke="#a06070" stroke-width="1"/><rect x="584.7" y="385" width="8.8" height="8.8" fill="#c6001e" stroke="#a06070" stroke-width="1"/><rect x="571.7" y="295.4" width="8.8" height="8.8" fill="#c6001e" stroke="#a06070" stroke-width="1"/><rect x="590.4" y="383.5" width="8.8" height="8.8" fill="#c6001e" stroke="#a06070" stroke-width="1"/><rect x="586.9" y="293" width="8.8" height="8.8" fill="#c6001e" stroke="#a06070" stroke-width="1"/><rect x="596.3" y="382.6" width="8.8" height="8.8" fill="#c6001e" stroke="#a06070" stroke-width="1"/><rect x="602.2" y="276.8" width="8.8" height="8.8" fill="#0000b0" stroke="#5c5cac" stroke-width="1"/><rect x="602.2" y="296.3" width="8.8" height="8.8" fill="#0000b0" stroke="#5c5cac" stroke-width="1"/><rect x="597.9" y="286.6" width="8.8" height="8.8" fill="#0000b0" stroke="#5c5cac" stroke-width="1"/><rect x="606.6" y="286.6" width="8.8" height="8.8" fill="#0000b0" stroke="#5c5cac" stroke-width="1"/><rect x="602.2" y="371.1" width="8.8" height="8.8" fill="#0000b0" stroke="#5c5cac" stroke-width="1"/><rect x="618.8" y="281.5" width="8.8" height="8.8" fill="#0000b0" stroke="#5c5cac" stroke-width="1"/><rect x="609.4" y="371.4" width="8.8" height="8.8" fill="#0000b0" stroke="#5c5cac" stroke-width="1"/><rect x="635.2" y="284.1" width="8.8" height="8.8" fill="#0000b0" stroke="#5c5cac" stroke-width="1"/><rect x="616.4" y="372.5" width="8.8" height="8.8" fill="#0000b0" stroke="#5c5cac" stroke-width="1"/><rect x="651.2" y="288.4" width="8.8" height="8.8" fill="#0000b0" stroke="#5c5cac" stroke-width="1"/><rect x="623.3" y="374.4" width="8.8" height="8.8" fill="#0000b0" stroke="#5c5cac" stroke-width="1"/><rect x="666.7" y="294.3" width="8.8" height="8.8" fill="#0000b0" stroke="#5c5cac" stroke-width="1"/><rect x="629.9" y="376.9" width="8.8" height="8.8" fill="#0000b0" stroke="#5c5cac" stroke-width="1"/><rect x="683.4" y="298.5" width="8.8" height="8.8" fill="#0000b0" stroke="#5c5cac" stroke-width="1"/><rect x="673.6" y="315.4" width="8.8" height="8.8" fill="#0000b0" stroke="#5c5cac" stroke-width="1"/><rect x="674.7" y="304.8" width="8.8" height="8.8" fill="#0000b0" stroke="#5c5cac" stroke-width="1"/><rect x="682.3" y="309.2" width="8.8" height="8.8" fill="#0000b0" stroke="#5c5cac" stroke-width="1"/><rect x="636.2" y="380.2" width="8.8" height="8.8" fill="#0000b0" stroke="#5c5cac" stroke-width="1"/><rect x="695.4" y="310.9" width="8.8" height="8.8" fill="#0000b0" stroke="#5c5cac" stroke-width="1"/><rect x="642.2" y="384" width="8.8" height="8.8" fill="#0000b0" stroke="#5c5cac" stroke-width="1"/><rect x="708.2" y="321.3" width="8.8" height="8.8" fill="#0000b0" stroke="#5c5cac" stroke-width="1"/><rect x="647.8" y="388.5" width="8.8" height="8.8" fill="#0000b0" stroke="#5c5cac" stroke-width="1"/><rect x="720" y="333.1" width="8.8" height="8.8" fill="#0000b0" stroke="#5c5cac" stroke-width="1"/><rect x="652.8" y="393.5" width="8.8" height="8.8" fill="#0000b0" stroke="#5c5cac" stroke-width="1"/><rect x="730.4" y="345.9" width="8.8" height="8.8" fill="#0000b0" stroke="#5c5cac" stroke-width="1"/><rect x="657.3" y="399.1" width="8.8" height="8.8" fill="#0000b0" stroke="#5c5cac" stroke-width="1"/><rect x="742.8" y="357.9" width="8.8" height="8.8" fill="#0000b0" stroke="#5c5cac" stroke-width="1"/><rect x="725.9" y="367.7" width="8.8" height="8.8" fill="#0000b0" stroke="#5c5cac" stroke-width="1"/><rect x="732.1" y="359" width="8.8" height="8.8" fill="#0000b0" stroke="#5c5cac" stroke-width="1"/><rect x="736.5" y="366.6" width="8.8" height="8.8" fill="#0000b0" stroke="#5c5cac" stroke-width="1"/><rect x="661.1" y="405.1" width="8.8" height="8.8" fill="#0000b0" stroke="#5c5cac" stroke-width="1"/><rect x="747" y="374.6" width="8.8" height="8.8" fill="#0000b0" stroke="#5c5cac" stroke-width="1"/><rect x="664.4" y="411.4" width="8.8" height="8.8" fill="#0000b0" stroke="#5c5cac" stroke-width="1"/><rect x="752.9" y="390.1" width="8.8" height="8.8" fill="#0000b0" stroke="#5c5cac" stroke-width="1"/><rect x="666.9" y="418" width="8.8" height="8.8" fill="#0000b0" stroke="#5c5cac" stroke-width="1"/><rect x="757.2" y="406.1" width="8.8" height="8.8" fill="#0000b0" stroke="#5c5cac" stroke-width="1"/><rect x="668.8" y="424.9" width="8.8" height="8.8" fill="#0000b0" stroke="#5c5cac" stroke-width="1"/><rect x="759.8" y="422.5" width="8.8" height="8.8" fill="#0000b0" stroke="#5c5cac" stroke-width="1"/><rect x="669.9" y="431.9" width="8.8" height="8.8" fill="#0000b0" stroke="#5c5cac" stroke-width="1"/><rect x="764.6" y="439.1" width="8.8" height="8.8" fill="#0000b0" stroke="#5c5cac" stroke-width="1"/><rect x="745.1" y="439.1" width="8.8" height="8.8" fill="#0000b0" stroke="#5c5cac" stroke-width="1"/><rect x="754.8" y="434.7" width="8.8" height="8.8" fill="#0000b0" stroke="#5c5cac" stroke-width="1"/><rect x="754.8" y="443.5" width="8.8" height="8.8" fill="#0000b0" stroke="#5c5cac" stroke-width="1"/><rect x="670.2" y="439.1" width="8.8" height="8.8" fill="#0000b0" stroke="#5c5cac" stroke-width="1"/><rect x="759.8" y="455.6" width="8.8" height="8.8" fill="#0000b0" stroke="#5c5cac" stroke-width="1"/><rect x="669.9" y="446.2" width="8.8" height="8.8" fill="#0000b0" stroke="#5c5cac" stroke-width="1"/><rect x="757.2" y="472" width="8.8" height="8.8" fill="#0000b0" stroke="#5c5cac" stroke-width="1"/><rect x="668.8" y="453.2" width="8.8" height="8.8" fill="#0000b0" stroke="#5c5cac" stroke-width="1"/><rect x="752.9" y="488" width="8.8" height="8.8" fill="#0000b0" stroke="#5c5cac" stroke-width="1"/><rect x="666.9" y="460.1" width="8.8" height="8.8" fill="#0000b0" stroke="#5c5cac" stroke-width="1"/><rect x="747" y="503.5" width="8.8" height="8.8" fill="#0000b0" stroke="#5c5cac" stroke-width="1"/><rect x="664.4" y="466.7" width="8.8" height="8.8" fill="#0000b0" stroke="#5c5cac" stroke-width="1"/><rect x="742.8" y="520.2" width="8.8" height="8.8" fill="#0000b0" stroke="#5c5cac" stroke-width="1"/><rect x="725.9" y="510.5" width="8.8" height="8.8" fill="#0000b0" stroke="#5c5cac" stroke-width="1"/><rect x="736.5" y="511.5" width="8.8" height="8.8" fill="#0000b0" stroke="#5c5cac" stroke-width="1"/><rect x="732.1" y="519.1" width="8.8" height="8.8" fill="#0000b0" stroke="#5c5cac" stroke-width="1"/><rect x="661.1" y="473.1" width="8.8" height="8.8" fill="#0000b0" stroke="#5c5cac" stroke-width="1"/><rect x="730.4" y="532.2" width="8.8" height="8.8" fill="#0000b0" stroke="#5c5cac" stroke-width="1"/><rect x="657.3" y="479" width="8.8" height="8.8" fill="#0000b0" stroke="#5c5cac" stroke-width="1"/><rect x="720" y="545" width="8.8" height="8.8" fill="#0000b0" stroke="#5c5cac" stroke-width="1"/><rect x="652.8" y="484.6" width="8.8" height="8.8" fill="#0000b0" stroke="#5c5cac" stroke-width="1"/><rect x="708.2" y="556.8" width="8.8" height="8.8" fill="#0000b0" stroke="#5c5cac" stroke-width="1"/><rect x="647.8" y="489.6" width="8.8" height="8.8" fill="#0000b0" stroke="#5c5cac" stroke-width="1"/><rect x="695.4" y="567.2" width="8.8" height="8.8" fill="#0000b0" stroke="#5c5cac" stroke-width="1"/><rect x="642.2" y="494.1" width="8.8" height="8.8" fill="#0000b0" stroke="#5c5cac" stroke-width="1"/><rect x="683.4" y="579.6" width="8.8" height="8.8" fill="#0000b0" stroke="#5c5cac" stroke-width="1"/><rect x="673.6" y="562.7" width="8.8" height="8.8" fill="#0000b0" stroke="#5c5cac" stroke-width="1"/><rect x="682.3" y="568.9" width="8.8" height="8.8" fill="#0000b0" stroke="#5c5cac" stroke-width="1"/><rect x="674.7" y="573.3" width="8.8" height="8.8" fill="#0000b0" stroke="#5c5cac" stroke-width="1"/><rect x="636.2" y="497.9" width="8.8" height="8.8" fill="#0000b0" stroke="#5c5cac" stroke-width="1"/><rect x="666.7" y="583.8" width="8.8" height="8.8" fill="#0000b0" stroke="#5c5cac" stroke-width="1"/><rect x="629.9" y="501.2" width="8.8" height="8.8" fill="#0000b0" stroke="#5c5cac" stroke-width="1"/><rect x="651.2" y="589.7" width="8.8" height="8.8" fill="#0000b0" stroke="#5c5cac" stroke-width="1"/><rect x="623.3" y="503.7" width="8.8" height="8.8" fill="#0000b0" stroke="#5c5cac" stroke-width="1"/><rect x="635.2" y="594" width="8.8" height="8.8" fill="#0000b0" stroke="#5c5cac" stroke-width="1"/><rect x="616.4" y="505.6" width="8.8" height="8.8" fill="#0000b0" stroke="#5c5cac" stroke-width="1"/><rect x="618.8" y="596.6" width="8.8" height="8.8" fill="#0000b0" stroke="#5c5cac" stroke-width="1"/><rect x="609.4" y="506.7" width="8.8" height="8.8" fill="#0000b0" stroke="#5c5cac" stroke-width="1"/><rect x="602.2" y="601.4" width="8.8" height="8.8" fill="#0000b0" stroke="#5c5cac" stroke-width="1"/><rect x="602.2" y="581.9" width="8.8" height="8.8" fill="#0000b0" stroke="#5c5cac" stroke-width="1"/><rect x="606.6" y="591.6" width="8.8" height="8.8" fill="#0000b0" stroke="#5c5cac" stroke-width="1"/><rect x="597.9" y="591.6" width="8.8" height="8.8" fill="#0000b0" stroke="#5c5cac" stroke-width="1"/><rect x="602.2" y="507.1" width="8.8" height="8.8" fill="#0000b0" stroke="#5c5cac" stroke-width="1"/><rect x="585.7" y="596.6" width="8.8" height="8.8" fill="#0000b0" stroke="#5c5cac" stroke-width="1"/><rect x="595.1" y="506.7" width="8.8" height="8.8" fill="#0000b0" stroke="#5c5cac" stroke-width="1"/><rect x="569.3" y="594" width="8.8" height="8.8" fill="#0000b0" stroke="#5c5cac" stroke-width="1"/><rect x="588.1" y="505.6" width="8.8" height="8.8" fill="#0000b0" stroke="#5c5cac" stroke-width="1"/><rect x="553.3" y="589.7" width="8.8" height="8.8" fill="#0000b0" stroke="#5c5cac" stroke-width="1"/><rect x="581.2" y="503.7" width="8.8" height="8.8" fill="#0000b0" stroke="#5c5cac" stroke-width="1"/><rect x="537.8" y="583.8" width="8.8" height="8.8" fill="#0000b0" stroke="#5c5cac" stroke-width="1"/><rect x="574.6" y="501.2" width="8.8" height="8.8" fill="#0000b0" stroke="#5c5cac" stroke-width="1"/><rect x="521.1" y="579.6" width="8.8" height="8.8" fill="#0000b0" stroke="#5c5cac" stroke-width="1"/><rect x="530.9" y="562.7" width="8.8" height="8.8" fill="#0000b0" stroke="#5c5cac" stroke-width="1"/><rect x="529.8" y="573.3" width="8.8" height="8.8" fill="#0000b0" stroke="#5c5cac" stroke-width="1"/><rect x="522.2" y="568.9" width="8.8" height="8.8" fill="#0000b0" stroke="#5c5cac" stroke-width="1"/><rect x="568.2" y="497.9" width="8.8" height="8.8" fill="#0000b0" stroke="#5c5cac" stroke-width="1"/><rect x="509.1" y="567.2" width="8.8" height="8.8" fill="#0000b0" stroke="#5c5cac" stroke-width="1"/><rect x="562.3" y="494.1" width="8.8" height="8.8" fill="#0000b0" stroke="#5c5cac" stroke-width="1"/><rect x="496.3" y="556.8" width="8.8" height="8.8" fill="#0000b0" stroke="#5c5cac" stroke-width="1"/><rect x="556.7" y="489.6" width="8.8" height="8.8" fill="#0000b0" stroke="#5c5cac" stroke-width="1"/><rect x="484.5" y="545" width="8.8" height="8.8" fill="#0000b0" stroke="#5c5cac" stroke-width="1"/><rect x="551.7" y="484.6" width="8.8" height="8.8" fill="#0000b0" stroke="#5c5cac" stroke-width="1"/><rect x="474.1" y="532.2" width="8.8" height="8.8" fill="#0000b0" stroke="#5c5cac" stroke-width="1"/><rect x="547.2" y="479" width="8.8" height="8.8" fill="#0000b0" stroke="#5c5cac" stroke-width="1"/><rect x="461.7" y="520.2" width="8.8" height="8.8" fill="#0000b0" stroke="#5c5cac" stroke-width="1"/><rect x="478.6" y="510.5" width="8.8" height="8.8" fill="#0000b0" stroke="#5c5cac" stroke-width="1"/><rect x="472.4" y="519.1" width="8.8" height="8.8" fill="#0000b0" stroke="#5c5cac" stroke-width="1"/><rect x="468" y="511.5" width="8.8" height="8.8" fill="#0000b0" stroke="#5c5cac" stroke-width="1"/><rect x="543.4" y="473.1" width="8.8" height="8.8" fill="#0000b0" stroke="#5c5cac" stroke-width="1"/><rect x="457.5" y="503.5" width="8.8" height="8.8" fill="#0000b0" stroke="#5c5cac" stroke-width="1"/><rect x="540.1" y="466.7" width="8.8" height="8.8" fill="#0000b0" stroke="#5c5cac" stroke-width="1"/><rect x="451.6" y="488" width="8.8" height="8.8" fill="#0000b0" stroke="#5c5cac" stroke-width="1"/><rect x="537.6" y="460.1" width="8.8" height="8.8" fill="#0000b0" stroke="#5c5cac" stroke-width="1"/><rect x="447.3" y="472" width="8.8" height="8.8" fill="#0000b0" stroke="#5c5cac" stroke-width="1"/><rect x="535.7" y="453.2" width="8.8" height="8.8" fill="#0000b0" stroke="#5c5cac" stroke-width="1"/><rect x="444.7" y="455.6" width="8.8" height="8.8" fill="#0000b0" stroke="#5c5cac" stroke-width="1"/><rect x="534.6" y="446.2" width="8.8" height="8.8" fill="#0000b0" stroke="#5c5cac" stroke-width="1"/><rect x="439.9" y="439.1" width="8.8" height="8.8" fill="#0000b0" stroke="#5c5cac" stroke-width="1"/><rect x="459.4" y="439.1" width="8.8" height="8.8" fill="#0000b0" stroke="#5c5cac" stroke-width="1"/><rect x="449.8" y="443.5" width="8.8" height="8.8" fill="#0000b0" stroke="#5c5cac" stroke-width="1"/><rect x="449.8" y="434.7" width="8.8" height="8.8" fill="#0000b0" stroke="#5c5cac" stroke-width="1"/><rect x="534.2" y="439.1" width="8.8" height="8.8" fill="#0000b0" stroke="#5c5cac" stroke-width="1"/><rect x="444.7" y="422.5" width="8.8" height="8.8" fill="#0000b0" stroke="#5c5cac" stroke-width="1"/><rect x="534.6" y="431.9" width="8.8" height="8.8" fill="#0000b0" stroke="#5c5cac" stroke-width="1"/><rect x="447.3" y="406.1" width="8.8" height="8.8" fill="#0000b0" stroke="#5c5cac" stroke-width="1"/><rect x="535.7" y="424.9" width="8.8" height="8.8" fill="#0000b0" stroke="#5c5cac" stroke-width="1"/><rect x="451.6" y="390.1" width="8.8" height="8.8" fill="#0000b0" stroke="#5c5cac" stroke-width="1"/><rect x="537.6" y="418" width="8.8" height="8.8" fill="#0000b0" stroke="#5c5cac" stroke-width="1"/><rect x="457.5" y="374.6" width="8.8" height="8.8" fill="#0000b0" stroke="#5c5cac" stroke-width="1"/><rect x="540.1" y="411.4" width="8.8" height="8.8" fill="#0000b0" stroke="#5c5cac" stroke-width="1"/><rect x="461.7" y="357.9" width="8.8" height="8.8" fill="#0000b0" stroke="#5c5cac" stroke-width="1"/><rect x="478.6" y="367.7" width="8.8" height="8.8" fill="#0000b0" stroke="#5c5cac" stroke-width="1"/><rect x="468" y="366.6" width="8.8" height="8.8" fill="#0000b0" stroke="#5c5cac" stroke-width="1"/><rect x="472.4" y="359" width="8.8" height="8.8" fill="#0000b0" stroke="#5c5cac" stroke-width="1"/><rect x="543.4" y="405.1" width="8.8" height="8.8" fill="#0000b0" stroke="#5c5cac" stroke-width="1"/><rect x="474.1" y="345.9" width="8.8" height="8.8" fill="#0000b0" stroke="#5c5cac" stroke-width="1"/><rect x="547.2" y="399.1" width="8.8" height="8.8" fill="#0000b0" stroke="#5c5cac" stroke-width="1"/><rect x="484.5" y="333.1" width="8.8" height="8.8" fill="#0000b0" stroke="#5c5cac" stroke-width="1"/><rect x="551.7" y="393.5" width="8.8" height="8.8" fill="#0000b0" stroke="#5c5cac" stroke-width="1"/><rect x="496.3" y="321.3" width="8.8" height="8.8" fill="#0000b0" stroke="#5c5cac" stroke-width="1"/><rect x="556.7" y="388.5" width="8.8" height="8.8" fill="#0000b0" stroke="#5c5cac" stroke-width="1"/><rect x="509.1" y="310.9" width="8.8" height="8.8" fill="#0000b0" stroke="#5c5cac" stroke-width="1"/><rect x="562.3" y="384" width="8.8" height="8.8" fill="#0000b0" stroke="#5c5cac" stroke-width="1"/><rect x="521.1" y="298.5" width="8.8" height="8.8" fill="#0000b0" stroke="#5c5cac" stroke-width="1"/><rect x="530.8" y="315.4" width="8.8" height="8.8" fill="#0000b0" stroke="#5c5cac" stroke-width="1"/><rect x="522.2" y="309.2" width="8.8" height="8.8" fill="#0000b0" stroke="#5c5cac" stroke-width="1"/><rect x="529.8" y="304.8" width="8.8" height="8.8" fill="#0000b0" stroke="#5c5cac" stroke-width="1"/><rect x="568.2" y="380.2" width="8.8" height="8.8" fill="#0000b0" stroke="#5c5cac" stroke-width="1"/><rect x="537.8" y="294.3" width="8.8" height="8.8" fill="#0000b0" stroke="#5c5cac" stroke-width="1"/><rect x="574.6" y="376.9" width="8.8" height="8.8" fill="#0000b0" stroke="#5c5cac" stroke-width="1"/><rect x="553.3" y="288.4" width="8.8" height="8.8" fill="#0000b0" stroke="#5c5cac" stroke-width="1"/><rect x="581.2" y="374.4" width="8.8" height="8.8" fill="#0000b0" stroke="#5c5cac" stroke-width="1"/><rect x="569.3" y="284.1" width="8.8" height="8.8" fill="#0000b0" stroke="#5c5cac" stroke-width="1"/><rect x="588.1" y="372.5" width="8.8" height="8.8" fill="#0000b0" stroke="#5c5cac" stroke-width="1"/><rect x="585.7" y="281.5" width="8.8" height="8.8" fill="#0000b0" stroke="#5c5cac" stroke-width="1"/><rect x="595.1" y="371.4" width="8.8" height="8.8" fill="#0000b0" stroke="#5c5cac" stroke-width="1"/><rect x="663.5" y="332.9" width="8.8" height="8.8" fill="#0000b0" stroke="#5c5cac" stroke-width="1"/><rect x="708.4" y="377.8" width="8.8" height="8.8" fill="#0000b0" stroke="#5c5cac" stroke-width="1"/><rect x="724.9" y="439.1" width="8.8" height="8.8" fill="#0000b0" stroke="#5c5cac" stroke-width="1"/><rect x="708.4" y="500.4" width="8.8" height="8.8" fill="#0000b0" stroke="#5c5cac" stroke-width="1"/><rect x="663.5" y="545.2" width="8.8" height="8.8" fill="#0000b0" stroke="#5c5cac" stroke-width="1"/><rect x="602.2" y="561.7" width="8.8" height="8.8" fill="#0000b0" stroke="#5c5cac" stroke-width="1"/><rect x="540.9" y="545.2" width="8.8" height="8.8" fill="#0000b0" stroke="#5c5cac" stroke-width="1"/><rect x="496.1" y="500.4" width="8.8" height="8.8" fill="#0000b0" stroke="#5c5cac" stroke-width="1"/><rect x="479.6" y="439.1" width="8.8" height="8.8" fill="#0000b0" stroke="#5c5cac" stroke-width="1"/><rect x="496.1" y="377.8" width="8.8" height="8.8" fill="#0000b0" stroke="#5c5cac" stroke-width="1"/><rect x="540.9" y="332.9" width="8.8" height="8.8" fill="#0000b0" stroke="#5c5cac" stroke-width="1"/><rect x="602.2" y="316.5" width="8.8" height="8.8" fill="#0000b0" stroke="#5c5cac" stroke-width="1"/></svg><div class="a" style="left:72px;top:748.5px;width:1062px;height:50px;background:#ececec"></div><div class="a" style="left:72px;top:749px;width:1061.5px;height:21.8px;background:#fff;border-top:1px solid #c6c6c6;border-bottom:1px solid #cccccc"></div><div class="t" style="top:749.02px;font-size:13.52px;line-height:19px;color:#0000d0;letter-spacing:-0.172px;font-style:italic;left:77px;">Comando:</div><div class="t" style="top:749.02px;font-size:13.52px;line-height:19px;color:#0000d0;letter-spacing:-0.107px;left:142px;">addlayer</div><div class="t" style="top:775.82px;font-size:13.52px;line-height:19px;color:#000;letter-spacing:-0.109px;left:73px;">Comando:</div><div class="a" style="left:138px;top:775.7px;width:968.8px;height:18.5px;background:#fff"></div><div class="a" style="left:1107.3px;top:772.4px;width:25.7px;height:25.2px;background:linear-gradient(#f6f6f6,#ebebeb);border:1px solid #bcbcbc"></div><div class="a" style="left:1113px;top:780px;width:13.7px;height:10px;border:1px solid #444;border-top:3px solid #111;background:#ececec"></div><div class="a" style="left:0;top:798px;width:1500px;height:46px;background:#dcdcdc"></div><div class="t" style="top:805.5px;font-size:10.09px;line-height:14px;color:#000;letter-spacing:0.061px;left:2.5px;">330.7921,139.0408</div><div class="t" style="top:825.5px;font-size:10.09px;line-height:14px;color:#000;letter-spacing:-0.039px;left:2.5px;">@330.7921,139.0408</div><div class="a" style="left:253px;top:802px;width:1px;height:38px;background:#8a8a8a"></div><div class="t" style="top:805.5px;font-size:10.09px;line-height:14px;color:#000;letter-spacing:0.273px;left:256px;">358.8255&lt;23°</div><div class="t" style="top:825.5px;font-size:10.09px;line-height:14px;color:#000;letter-spacing:0.118px;left:256px;">@358.8255&lt;23°</div><div class="t" style="top:810.3px;font-size:10.09px;line-height:14px;color:#000;letter-spacing:0.048px;left:571px;">Selezionare entità o regione</div><div class="t" style="top:822.3px;font-size:10.09px;line-height:14px;color:#000;letter-spacing:0.112px;left:568px;">Spostare entità o riferimento</div><div class="t" style="top:810.3px;font-size:10.09px;line-height:14px;color:#000;letter-spacing:0.082px;left:949px;">Entità selezionate:</div><div class="t" style="top:822.3px;font-size:10.09px;line-height:14px;color:#000;letter-spacing:0.184px;left:949px;">149 entità su livello "0"</div><div class="a" style="left:506.5px;top:818.5px;width:5px;height:5px;border-radius:3px;background:#cfcfcf"></div><div class="a" style="left:941.5px;top:818.5px;width:5px;height:5px;border-radius:3px;background:#cfcfcf"></div><div class="a" style="left:1269.5px;top:818.5px;width:5px;height:5px;border-radius:3px;background:#cfcfcf"></div><svg style="left:716px;top:804px" width="20" height="34" viewBox="0 0 20 34"><rect x="2.5" y="2.5" width="15" height="29" rx="7.5" fill="#f8f8f8" stroke="#333" stroke-width="1"/><path d="M2.5 13.5h15M10 2.5v11" stroke="#333" stroke-width=".9"/><rect x="8.5" y="5" width="3" height="6" rx="1.5" fill="#fff" stroke="#333" stroke-width=".8"/></svg><div class="a" style="left:1134px;top:108px;width:21px;height:690px;background:#ececec"></div><div class="a" style="left:1144px;top:108px;width:11.5px;height:690px;background:#e4e4e4"></div><div class="a" style="left:1135px;top:327px;width:20px;height:132px;border-radius:6px 0 0 6px;background:#1a84f8"></div><div class="a" style="left:1135px;top:463px;width:20px;height:119px;border-radius:6px 0 0 6px;background:#d6d6d6"></div><div class="t" style="left:1145px;top:393px;font-size:13px;line-height:16px;color:#fff;letter-spacing:.25px;transform:translate(-50%,-50%) rotate(-90deg)">Editor di proprietà</div><div class="t" style="left:1145px;top:522.5px;font-size:13px;line-height:16px;color:#333;letter-spacing:.25px;transform:translate(-50%,-50%) rotate(-90deg)">Elenco dei livelli</div><div class="a" style="left:1155px;top:108px;width:299px;height:690px;background:#ececec"></div><div class="a" style="left:1155px;top:108px;width:299px;height:23px;background:linear-gradient(#e4e4e4,#d4d4d4)"></div><div class="a" style="left:1155px;top:130.5px;width:299px;height:1px;background:#c4c4c4"></div><svg style="left:1156px;top:110px" width="34" height="17" viewBox="0 0 34 17"><circle cx="7.7" cy="8.2" r="6.6" fill="#505050"/><path d="M5 5.5l5.4 5.4M10.4 5.5L5 10.9" stroke="#eee" stroke-width="1.7"/><circle cx="26" cy="8.2" r="6.6" fill="#505050"/><rect x="24.3" y="5" width="5.2" height="4.2" fill="none" stroke="#eee" stroke-width="1.1"/><rect x="22.5" y="7.2" width="5.2" height="4.2" fill="#505050" stroke="#eee" stroke-width="1.1"/></svg><div class="t" style="top:111.36px;font-size:11.65px;line-height:16px;color:#383838;letter-spacing:0.186px;left:1274.25px;">Editor di proprietà</div><div class="t" style="top:144.82px;font-size:13.52px;line-height:19px;color:#000;letter-spacing:-0.193px;left:1168.5px;">Selezione:</div><div class="combo" style="left:1239px;top:143.5px;width:202.5px;height:21px"><div class="cb" style="top:2.5px"><svg style="left:4.5px;top:2.5px" width="7" height="11" viewBox="0 0 7 11"><path d="M1 4L3.5 1.5 6 4M1 7l2.5 2.5L6 7" stroke="#fff" stroke-width="1.4" fill="none" stroke-linecap="round" stroke-linejoin="round"/></svg></div></div><div class="t" style="top:144.52px;font-size:13.52px;line-height:19px;color:#000;letter-spacing:-0.112px;left:1242.5px;">Testo [12]</div><div class="t" style="top:168.54px;font-size:11.44px;line-height:16px;color:#000;letter-spacing:0.183px;left:1175px;">Proprietà generali</div><div class="grp" style="left:1168.5px;top:183px;width:273.5px;height:185.5px"></div><div class="t" style="top:197.32px;font-size:13.52px;line-height:19px;color:#000;letter-spacing:-0.076px;left:1244.52px;">Livello:</div><div class="combo" style="left:1288.5px;top:196px;width:116px;height:20.5px"><div class="cb" style="top:2.25px"><svg style="left:4.5px;top:2.5px" width="7" height="11" viewBox="0 0 7 11"><path d="M1 4L3.5 1.5 6 4M1 7l2.5 2.5L6 7" stroke="#fff" stroke-width="1.4" fill="none" stroke-linecap="round" stroke-linejoin="round"/></svg></div></div><div class="a" style="left:1292.2px;top:201.75px;width:15.5px;height:9.5px;border:1px solid #222;background:#fff"></div><div class="t" style="top:196.77px;font-size:13.52px;line-height:19px;color:#000;letter-spacing:-0.108px;left:1314.2px;">0</div><div class="a" style="left:1407px;top:193.5px;width:26px;height:25.5px;border:1px solid #b0b0b0;background:linear-gradient(#f6f6f6,#e2e2e2)"></div><div class="a" style="left:1413.5px;top:200.5px;width:13px;height:11.5px;background:repeating-linear-gradient(#555 0 1.5px,transparent 1.5px 5px)"></div><div class="t" style="top:223.32px;font-size:13.52px;line-height:19px;color:#000;letter-spacing:-0.089px;left:1243.05px;">Colore:</div><div class="combo" style="left:1288.5px;top:222.5px;width:143.5px;height:20.5px"><div class="cb" style="top:2.25px"><svg style="left:4.5px;top:2.5px" width="7" height="11" viewBox="0 0 7 11"><path d="M1 4L3.5 1.5 6 4M1 7l2.5 2.5L6 7" stroke="#fff" stroke-width="1.4" fill="none" stroke-linecap="round" stroke-linejoin="round"/></svg></div></div><div class="a" style="left:1292.2px;top:228.25px;width:15.5px;height:9.5px;border:1px solid #222;background:#fff"></div><div class="t" style="top:223.27px;font-size:13.52px;line-height:19px;color:#000;letter-spacing:-0.079px;left:1314.2px;">Da livello</div><div class="t" style="top:247.32px;font-size:13.52px;line-height:19px;color:#000;letter-spacing:-0.086px;left:1180.08px;">Spessore di linea:</div><div class="combo" style="left:1288.5px;top:246.5px;width:143.5px;height:20.5px"><div class="cb" style="top:2.25px"><svg style="left:4.5px;top:2.5px" width="7" height="11" viewBox="0 0 7 11"><path d="M1 4L3.5 1.5 6 4M1 7l2.5 2.5L6 7" stroke="#fff" stroke-width="1.4" fill="none" stroke-linecap="round" stroke-linejoin="round"/></svg></div></div><div class="a" style="left:1292.5px;top:256.25px;width:15.5px;height:1px;background:#333"></div><div class="t" style="top:247.27px;font-size:13.52px;line-height:19px;color:#000;letter-spacing:-0.079px;left:1314.2px;">Da livello</div><div class="t" style="top:271.32px;font-size:13.52px;line-height:19px;color:#000;letter-spacing:-0.078px;left:1210.95px;">Tipo di linea:</div><div class="combo" style="left:1288.5px;top:270px;width:143.5px;height:20.5px"><div class="cb" style="top:2.25px"><svg style="left:4.5px;top:2.5px" width="7" height="11" viewBox="0 0 7 11"><path d="M1 4L3.5 1.5 6 4M1 7l2.5 2.5L6 7" stroke="#fff" stroke-width="1.4" fill="none" stroke-linecap="round" stroke-linejoin="round"/></svg></div></div><div class="t" style="top:269.82px;font-size:13.52px;line-height:19px;color:#000;letter-spacing:-0.079px;left:1292px;">Da livello</div><div class="t" style="top:294.32px;font-size:13.52px;line-height:19px;color:#000;letter-spacing:-0.081px;left:1202.3px;">Scala del tipo:</div><div class="field" style="left:1288.5px;top:294px;width:143.5px;height:19.5px"></div><div class="t" style="top:294.17px;font-size:13.52px;line-height:19px;color:#000;letter-spacing:-0.289px;left:1290.5px;">1</div><div class="t" style="top:317.32px;font-size:13.52px;line-height:19px;color:#000;letter-spacing:-0.088px;left:1177.85px;">Ordine di disegno:</div><div class="field" style="left:1288.5px;top:317px;width:143.5px;height:19.5px"></div><div class="t" style="top:317.17px;font-size:13.52px;line-height:19px;color:#000;letter-spacing:-0.653px;left:1290.5px;">*VARIE*</div><div class="t" style="top:340.32px;font-size:13.52px;line-height:19px;color:#000;letter-spacing:-0.097px;left:1239.34px;">Manico:</div><div class="field" style="left:1288.5px;top:340px;width:143.5px;height:19.5px"></div><div class="t" style="top:340.17px;font-size:13.52px;line-height:19px;color:#b8b8b8;letter-spacing:-0.653px;left:1290.5px;">*VARIE*</div><div class="t" style="top:372.54px;font-size:11.44px;line-height:16px;color:#000;letter-spacing:0.252px;left:1175px;">Proprietà specifiche</div><div class="grp" style="left:1168.5px;top:387.5px;width:273.5px;height:403px"></div><div class="t" style="top:398.82px;font-size:13.52px;line-height:19px;color:#000;letter-spacing:-0.095px;left:1240px;">Semplice:</div><div class="combo" style="left:1301.5px;top:398px;width:130.5px;height:20.5px"><div class="cb" style="top:2.25px"><svg style="left:4.5px;top:2.5px" width="7" height="11" viewBox="0 0 7 11"><path d="M1 4L3.5 1.5 6 4M1 7l2.5 2.5L6 7" stroke="#fff" stroke-width="1.4" fill="none" stroke-linecap="round" stroke-linejoin="round"/></svg></div></div><div class="t" style="top:398.77px;font-size:13.52px;line-height:19px;color:#000;letter-spacing:-0.124px;left:1305.2px;">No</div><div class="t" style="top:422.32px;font-size:13.52px;line-height:19px;color:#000;letter-spacing:-0.086px;left:1262.95px;">Testo:</div><div class="field" style="left:1301.5px;top:422px;width:130.5px;height:19.5px"></div><div class="t" style="top:422.17px;font-size:13.52px;line-height:19px;color:#000;letter-spacing:-0.653px;left:1303.5px;">*VARIE*</div><div class="t" style="top:445.32px;font-size:13.52px;line-height:19px;color:#000;letter-spacing:-0.091px;left:1211.11px;">Testo normale:</div><div class="field" style="left:1301.5px;top:445px;width:130.5px;height:19.5px"></div><div class="t" style="top:445.17px;font-size:13.52px;line-height:19px;color:#b8b8b8;letter-spacing:-0.653px;left:1303.5px;">*VARIE*</div><div class="t" style="top:468.82px;font-size:13.52px;line-height:19px;color:#000;letter-spacing:-0.093px;left:1202.97px;">Nome carattere:</div><div class="combo" style="left:1301.5px;top:468px;width:130.5px;height:20.5px"><div class="cb" style="top:2.25px"><svg style="left:4.5px;top:2.5px" width="7" height="11" viewBox="0 0 7 11"><path d="M1 4L3.5 1.5 6 4M1 7l2.5 2.5L6 7" stroke="#fff" stroke-width="1.4" fill="none" stroke-linecap="round" stroke-linejoin="round"/></svg></div></div><div class="a" style="left:1300px;top:468px;width:109px;height:21px;overflow:hidden"><div class="t" style="top:0.52px;font-size:13.52px;line-height:19px;color:#000;letter-spacing:-0.196px;left:5.4px;">Times New Roman</div></div><div class="t" style="top:492.32px;font-size:13.52px;line-height:19px;color:#000;letter-spacing:-0.083px;left:1218.51px;">Altezza testo:</div><div class="field" style="left:1301.5px;top:492px;width:130.5px;height:19.5px"></div><div class="t" style="top:492.17px;font-size:13.52px;line-height:19px;color:#000;letter-spacing:-0.289px;left:1303.5px;">12</div><div class="t" style="top:515.32px;font-size:13.52px;line-height:19px;color:#000;letter-spacing:-0.087px;left:1178.5px;">Larghezza del testo:</div><div class="field" style="left:1301.5px;top:515px;width:130.5px;height:19.5px"></div><div class="t" style="top:515.17px;font-size:13.52px;line-height:19px;color:#000;letter-spacing:-0.289px;left:1303.5px;">0</div><div class="t" style="top:538.32px;font-size:13.52px;line-height:19px;color:#000;letter-spacing:-0.087px;left:1220.72px;">Angolo testo:</div><div class="field" style="left:1301.5px;top:538px;width:130.5px;height:19.5px"></div><div class="t" style="top:538.17px;font-size:13.52px;line-height:19px;color:#000;letter-spacing:-0.289px;left:1303.5px;">0</div><div class="t" style="top:561.32px;font-size:13.52px;line-height:19px;color:#000;letter-spacing:-0.091px;left:1248.88px;">Scala X:</div><div class="field" style="left:1301.5px;top:561px;width:130.5px;height:19.5px"></div><div class="t" style="top:561.17px;font-size:13.52px;line-height:19px;color:#000;letter-spacing:-0.289px;left:1303.5px;">1</div><div class="t" style="top:585.32px;font-size:13.52px;line-height:19px;color:#000;letter-spacing:-0.089px;left:1237.03px;">Grassetto:</div><div class="combo" style="left:1301.5px;top:584.5px;width:130.5px;height:20.5px"><div class="cb" style="top:2.25px"><svg style="left:4.5px;top:2.5px" width="7" height="11" viewBox="0 0 7 11"><path d="M1 4L3.5 1.5 6 4M1 7l2.5 2.5L6 7" stroke="#fff" stroke-width="1.4" fill="none" stroke-linecap="round" stroke-linejoin="round"/></svg></div></div><div class="t" style="top:585.27px;font-size:13.52px;line-height:19px;color:#000;letter-spacing:-0.124px;left:1305.2px;">No</div><div class="t" style="top:609.32px;font-size:13.52px;line-height:19px;color:#000;letter-spacing:-0.07px;left:1259.99px;">Italico:</div><div class="combo" style="left:1301.5px;top:608px;width:130.5px;height:20.5px"><div class="cb" style="top:2.25px"><svg style="left:4.5px;top:2.5px" width="7" height="11" viewBox="0 0 7 11"><path d="M1 4L3.5 1.5 6 4M1 7l2.5 2.5L6 7" stroke="#fff" stroke-width="1.4" fill="none" stroke-linecap="round" stroke-linejoin="round"/></svg></div></div><div class="t" style="top:608.77px;font-size:13.52px;line-height:19px;color:#000;letter-spacing:-0.124px;left:1305.2px;">No</div><div class="t" style="top:632.32px;font-size:13.52px;line-height:19px;color:#000;letter-spacing:-0.082px;left:1208.13px;">Interasse linee:</div><div class="field" style="left:1301.5px;top:632px;width:130.5px;height:19.5px"></div><div class="t" style="top:632.17px;font-size:13.52px;line-height:19px;color:#000;letter-spacing:-0.289px;left:1303.5px;">1</div><div class="t" style="top:652.82px;font-size:13.52px;line-height:19px;color:#000;letter-spacing:-0.155px;font-weight:700;left:1177px;">Posizione del testo</div><div class="t" style="top:673.32px;font-size:13.52px;line-height:19px;color:#000;letter-spacing:-0.092px;left:1285.91px;">X:</div><div class="field" style="left:1301.5px;top:673px;width:130.5px;height:19.5px"></div><div class="t" style="top:673.17px;font-size:13.52px;line-height:19px;color:#000;letter-spacing:-0.653px;left:1303.5px;">*VARIE*</div><div class="t" style="top:696.32px;font-size:13.52px;line-height:19px;color:#000;letter-spacing:-0.087px;left:1286.65px;">Y:</div><div class="field" style="left:1301.5px;top:696px;width:130.5px;height:19.5px"></div><div class="t" style="top:696.17px;font-size:13.52px;line-height:19px;color:#000;letter-spacing:-0.653px;left:1303.5px;">*VARIE*</div><div class="t" style="top:716.82px;font-size:13.52px;line-height:19px;color:#000;letter-spacing:-0.115px;font-weight:700;left:1177px;">Allineamento</div><div class="t" style="top:738.32px;font-size:13.52px;line-height:19px;color:#000;letter-spacing:-0.086px;left:1227.41px;">Orizzontale:</div><div class="combo" style="left:1301.5px;top:737.5px;width:130.5px;height:20.5px"><div class="cb" style="top:2.25px"><svg style="left:4.5px;top:2.5px" width="7" height="11" viewBox="0 0 7 11"><path d="M1 4L3.5 1.5 6 4M1 7l2.5 2.5L6 7" stroke="#fff" stroke-width="1.4" fill="none" stroke-linecap="round" stroke-linejoin="round"/></svg></div></div><div class="t" style="top:738.27px;font-size:13.52px;line-height:19px;color:#000;letter-spacing:-0.097px;left:1305.2px;">Centro</div><div class="t" style="top:762.32px;font-size:13.52px;line-height:19px;color:#000;letter-spacing:-0.08px;left:1243.69px;">Verticale:</div><div class="combo" style="left:1301.5px;top:761.5px;width:130.5px;height:20.5px"><div class="cb" style="top:2.25px"><svg style="left:4.5px;top:2.5px" width="7" height="11" viewBox="0 0 7 11"><path d="M1 4L3.5 1.5 6 4M1 7l2.5 2.5L6 7" stroke="#fff" stroke-width="1.4" fill="none" stroke-linecap="round" stroke-linejoin="round"/></svg></div></div><div class="t" style="top:762.27px;font-size:13.52px;line-height:19px;color:#000;letter-spacing:-0.106px;left:1305.2px;">Medio</div><div class="a" style="left:1454px;top:108px;width:46px;height:690px;background:linear-gradient(90deg,#e2e2e2,#dcdcdc 40%,#c6c6c6)"></div><div class="a" style="left:1462px;top:116px;width:27px;height:2px;background:repeating-linear-gradient(90deg,#b4b4b4 0 2px,transparent 2px 5px)"></div><div class="a" style="left:1456px;top:120px;width:44px;height:42.400000000000006px;border-radius:6px 0 0 6px;background:#b9b9b9"></div><div class="a" style="left:1456px;top:269.5px;width:44px;height:41.89999999999998px;border-radius:6px 0 0 6px;background:#b9b9b9"></div><div class="a" style="left:1456px;top:418px;width:44px;height:42.39999999999998px;border-radius:6px 0 0 6px;background:#b9b9b9"></div><div class="a" style="left:1458px;top:261px;width:42px;height:1px;background:repeating-linear-gradient(90deg,#555 0 1px,transparent 1px 3px)"></div><div class="a" style="left:1458px;top:410.5px;width:42px;height:1px;background:repeating-linear-gradient(90deg,#555 0 1px,transparent 1px 3px)"></div><svg style="left:0;top:0" width="1500" height="520" viewBox="0 0 1500 520"><rect x="1463.5" y="127.2" width="27" height="27" fill="#fff" stroke="#222" stroke-width="1"/><rect x="1463.5" y="127.2" width="27" height="4.8" fill="#000"/><rect x="1464.6" y="128.1" width="3.2" height="3.2" fill="#fff"/><rect x="1463.5" y="174.4" width="27" height="27" fill="#fff" stroke="#222" stroke-width="1"/><rect x="1463.5" y="174.4" width="27" height="4.8" fill="#000"/><rect x="1464.6" y="175.3" width="3.2" height="3.2" fill="#fff"/><rect x="1463.5" y="220.1" width="27" height="27" fill="#fff" stroke="#222" stroke-width="1"/><rect x="1463.5" y="220.1" width="27" height="4.8" fill="#000"/><rect x="1464.6" y="221" width="3.2" height="3.2" fill="#fff"/><rect x="1463.5" y="276.2" width="27" height="27" fill="#fff" stroke="#222" stroke-width="1"/><rect x="1463.5" y="276.2" width="27" height="4.8" fill="#000"/><rect x="1464.6" y="277.09999999999997" width="3.2" height="3.2" fill="#fff"/><rect x="1463.5" y="323.2" width="27" height="27" fill="#fff" stroke="#222" stroke-width="1"/><rect x="1463.5" y="323.2" width="27" height="4.8" fill="#000"/><rect x="1464.6" y="324.09999999999997" width="3.2" height="3.2" fill="#fff"/><rect x="1463.5" y="369.4" width="27" height="27" fill="#fff" stroke="#222" stroke-width="1"/><rect x="1463.5" y="369.4" width="27" height="4.8" fill="#000"/><rect x="1464.6" y="370.29999999999995" width="3.2" height="3.2" fill="#fff"/><rect x="1463.5" y="425.2" width="27" height="27" fill="#fff" stroke="#222" stroke-width="1"/><rect x="1463.5" y="425.2" width="27" height="4.8" fill="#000"/><rect x="1464.6" y="426.09999999999997" width="3.2" height="3.2" fill="#fff"/><rect x="1463.5" y="472.2" width="27" height="27" fill="#fff" stroke="#222" stroke-width="1"/><rect x="1463.5" y="472.2" width="27" height="4.8" fill="#000"/><rect x="1464.6" y="473.09999999999997" width="3.2" height="3.2" fill="#fff"/><path d="M1470.2 140.4L1479.8 135.3V142.8L1470.2 148.4z" fill="#9a9a9a" stroke="#444" stroke-width=".7"/><path d="M1472.2 141L1481.8 135.9V143.4L1472.2 149z" fill="#bdbdbd" stroke="#444" stroke-width=".7"/><path d="M1474.2 141.6L1483.8 136.5V144L1474.2 149.6z" fill="#ffffff" stroke="#444" stroke-width=".7"/><path d="M1476.5 146.2L1481.5 139.2l.4 5.5zM1478 144.2l3-1" fill="none" stroke="#e02828" stroke-width=".8"/><rect x="1470.2" y="184.4" width="10.8" height="7.2" fill="#f6ecc0" stroke="#555" stroke-width=".8"/><circle cx="1479.3" cy="191.3" r="4.5" fill="#f6ecc0" stroke="#555" stroke-width=".8"/><rect x="1470.2" y="184.4" width="10.8" height="7.2" fill="none" stroke="#555" stroke-width=".8"/><rect x="1468.6" y="230.2" width="16.8" height="11.5" rx="2.5" fill="#f4f4f2" stroke="#c0cee6" stroke-width="1"/><rect x="1466.2" y="284.5" width="4.3" height="2.9" rx=".5" fill="#000"/><rect x="1473.4" y="284.5" width="14.4" height="2.9" fill="#fff" stroke="#222" stroke-width=".7"/><rect x="1466.2" y="290.5" width="4.3" height="2.9" rx=".5" fill="#000"/><rect x="1473.4" y="290.5" width="14.4" height="2.9" fill="#fff" stroke="#222" stroke-width=".7"/><rect x="1466.2" y="296.5" width="4.3" height="2.9" rx=".5" fill="#000"/><rect x="1473.4" y="296.5" width="14.4" height="2.9" fill="#fff" stroke="#222" stroke-width=".7"/><path d="M1470 333.7L1475.6 339.2V344.7l3.4 1V339.2L1484.3 333.7z" fill="#b4b4b4" stroke="#555" stroke-width=".6"/><ellipse cx="1477.1" cy="333.9" rx="7.2" ry="1.7" fill="#8a8a8a" stroke="#555" stroke-width=".5"/><path d="M1469.2 378.4V391.4L1474.2 388.59999999999997H1485V381.09999999999997H1474.2z" fill="#e4e4e4" stroke="#333" stroke-width=".8"/><rect x="1478" y="381.4" width="6.8" height="7" fill="#7c7c7c"/><path d="M1467 384.79999999999995h20.5" stroke="#f07070" stroke-width=".8" stroke-dasharray="2 1"/><rect x="1465.5" y="433" width="15" height="1.5" fill="#9a9a9a"/><rect x="1465.5" y="436.4" width="14" height="1.5" fill="#9a9a9a"/><rect x="1465.5" y="439.8" width="17" height="1.5" fill="#9a9a9a"/><rect x="1465.5" y="443.2" width="17.5" height="1.5" fill="#9a9a9a"/><path d="M1464 448.09999999999997h26" stroke="#222" stroke-width=".6"/><rect x="1472" y="449.59999999999997" width="16" height="1.5" fill="#666"/><path d="M1467.5 449.4l-1.5 1 1.5 1" stroke="#444" stroke-width=".5" fill="none"/><rect x="1470.2" y="481" width="13.6" height="14" rx="1" fill="#c08530" stroke="#8f5f1e" stroke-width=".7"/><rect x="1472" y="483" width="10" height="10.5" fill="#f4f4f4"/><rect x="1474" y="479.7" width="6" height="3.3" fill="#8f9088" stroke="#666" stroke-width=".5"/><path d="M1473.5 486.2h7M1473.5 488.4h7M1473.5 490.59999999999997h5" stroke="#c4c4c4" stroke-width=".8"/><path d="M1482 493.5h-3l3-3z" fill="#aaa"/></svg><svg style="left:570px;top:244px" width="360" height="358" viewBox="570 244 360 358"><rect x="573.3" y="247.3" width="352.5" height="349.5" rx="4" fill="#9e9e9e"/><rect x="574.8" y="248.8" width="349.5" height="346.5" rx="3" fill="#b4b4b4"/><rect x="576.6" y="250.3" width="345.7" height="342.9" rx="2" fill="#ececec"/></svg><div class="t" style="top:270.82px;font-size:13.52px;line-height:19px;color:#000;letter-spacing:-0.066px;left:595px;">Livello superiore:</div><div class="combo" style="left:706px;top:269px;width:198px;height:21px"><div class="cb" style="top:2.5px"><svg style="left:4.5px;top:2.5px" width="7" height="11" viewBox="0 0 7 11"><path d="M1 4L3.5 1.5 6 4M1 7l2.5 2.5L6 7" stroke="#fff" stroke-width="1.4" fill="none" stroke-linecap="round" stroke-linejoin="round"/></svg></div></div><div class="t" style="top:302.32px;font-size:13.52px;line-height:19px;color:#000;letter-spacing:-0.069px;left:595px;">Nome del livello:</div><div class="field" style="left:706px;top:302px;width:198px;height:19.5px"></div><div class="t" style="top:302.32px;font-size:13.52px;line-height:19px;color:#000;letter-spacing:-0.011px;left:707.5px;">Numeri</div><div class="t" style="top:325.04px;font-size:11.44px;line-height:16px;color:#000;letter-spacing:0.413px;left:602.5px;">Attributi</div><div class="grp" style="left:595px;top:340px;width:309px;height:162.5px"></div><div class="t" style="top:357.82px;font-size:13.52px;line-height:19px;color:#000;letter-spacing:-0.083px;left:657.5px;">Colore:</div><div class="combo" style="left:710px;top:357px;width:179px;height:20.5px"><div class="cb" style="top:2.25px"><svg style="left:4.5px;top:2.5px" width="7" height="11" viewBox="0 0 7 11"><path d="M1 4L3.5 1.5 6 4M1 7l2.5 2.5L6 7" stroke="#fff" stroke-width="1.4" fill="none" stroke-linecap="round" stroke-linejoin="round"/></svg></div></div><div class="a" style="left:713.5px;top:362.75px;width:15.5px;height:9.5px;border:1px solid #222;background:#ffff00"></div><div class="t" style="top:357.32px;font-size:13.52px;line-height:19px;color:#000;letter-spacing:-0.177px;left:735px;">Giallo</div><div class="t" style="top:389.82px;font-size:13.52px;line-height:19px;color:#000;letter-spacing:-0.089px;left:634.5px;">Larghezza:</div><div class="combo" style="left:710px;top:389px;width:179px;height:20.5px"><div class="cb" style="top:2.25px"><svg style="left:4.5px;top:2.5px" width="7" height="11" viewBox="0 0 7 11"><path d="M1 4L3.5 1.5 6 4M1 7l2.5 2.5L6 7" stroke="#fff" stroke-width="1.4" fill="none" stroke-linecap="round" stroke-linejoin="round"/></svg></div></div><div class="a" style="left:714px;top:398.75px;width:15.5px;height:1px;background:#333"></div><div class="t" style="top:389.32px;font-size:13.52px;line-height:19px;color:#000;letter-spacing:-0.157px;left:735px;">0.25mm (ISO)</div><div class="t" style="top:421.82px;font-size:13.52px;line-height:19px;color:#000;letter-spacing:-0.046px;left:625px;">Tipo di linea:</div><div class="combo" style="left:710px;top:421px;width:179px;height:20.5px"><div class="cb" style="top:2.25px"><svg style="left:4.5px;top:2.5px" width="7" height="11" viewBox="0 0 7 11"><path d="M1 4L3.5 1.5 6 4M1 7l2.5 2.5L6 7" stroke="#fff" stroke-width="1.4" fill="none" stroke-linecap="round" stroke-linejoin="round"/></svg></div></div><div class="t" style="top:420.32px;font-size:13.52px;line-height:19px;color:#000;letter-spacing:-0.014px;left:713px;">Continua</div><div class="a" style="left:610px;top:452.5px;width:14px;height:14px;border-radius:3.5px;background:linear-gradient(#3b94fb,#0a6ef5)"></div><svg style="left:610px;top:452.5px" width="14" height="14" viewBox="0 0 14 14"><path d="M3.5 7.3l2.6 2.9 4.5-6.2" stroke="#fff" stroke-width="1.7" fill="none" stroke-linecap="round" stroke-linejoin="round"/></svg><div class="t" style="top:449.82px;font-size:13.52px;line-height:19px;color:#000;letter-spacing:-0.078px;left:628.5px;">Tracciabile</div><div class="a" style="left:610px;top:475.5px;width:14px;height:14px;border-radius:3.5px;background:linear-gradient(#3b94fb,#0a6ef5)"></div><svg style="left:610px;top:475.5px" width="14" height="14" viewBox="0 0 14 14"><path d="M3.5 7.3l2.6 2.9 4.5-6.2" stroke="#fff" stroke-width="1.7" fill="none" stroke-linecap="round" stroke-linejoin="round"/></svg><div class="t" style="top:472.82px;font-size:13.52px;line-height:19px;color:#000;letter-spacing:-0.035px;left:628.5px;">Agganciabile</div><div class="combo" style="left:747px;top:556px;width:73.5px;height:20px"></div><div class="t" style="top:556.32px;font-size:13.52px;line-height:19px;color:#000;letter-spacing:-0.157px;left:761.5px;">Annulla</div><div class="a" style="left:836px;top:556px;width:67px;height:20px;border-radius:5px;background:linear-gradient(#2d8dfb,#0a70f6);box-shadow:0 1px 1px rgba(0,0,0,.2)"></div><div class="t" style="top:556.32px;font-size:13.52px;line-height:19px;color:#fff;letter-spacing:-0.516px;left:860.25px;">OK</div><div class="a" style="left:760.2px;top:327.7px;width:78.4px;height:78.4px;border-radius:50%;background:rgba(255,255,255,.08);border:4.4px solid rgba(120,150,182,.5);box-shadow:0 0 1.5px rgba(120,150,180,.5),inset 0 0 1px 1.5px rgba(140,168,196,.4),inset 0 0 4px 3px rgba(255,255,255,.55)"></div><svg style="left:790px;top:360px" width="34" height="42" viewBox="790 360 34 42"><path d="M799.2 367.1V388.8L804.8 383.4L809.9 393.2L812.5 392L808 382.4L814 382Z" fill="#fff" stroke="#000" stroke-width="1.3" stroke-linejoin="miter"/></svg>
</div>
</body></html>
